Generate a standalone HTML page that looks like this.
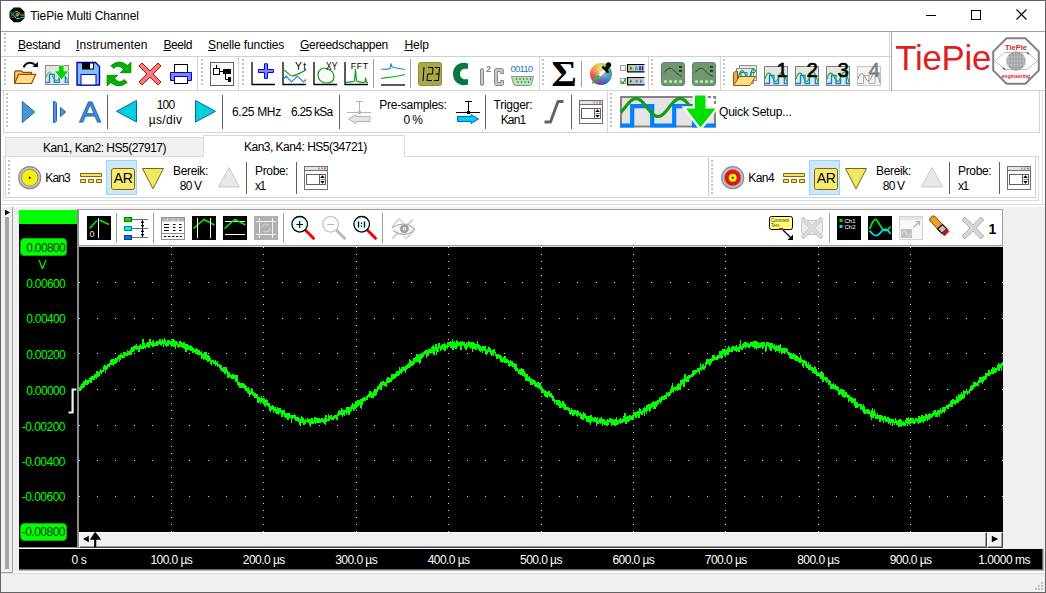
<!DOCTYPE html>
<html lang="nl">
<head>
<meta charset="utf-8">
<title>TiePie Multi Channel</title>
<style>
*{box-sizing:border-box;margin:0;padding:0}
html,body{width:1046px;height:593px;overflow:hidden;background:#fff}
body{position:relative;font-family:"Liberation Sans",sans-serif;font-size:12px;color:#000}
.a{position:absolute}
.t{position:absolute;white-space:nowrap;line-height:14px;font-size:12px;color:#000}
.c{text-align:center}
.hl{position:absolute;height:1px}
.vl{position:absolute;width:1px}
svg{position:absolute;overflow:visible}
.grip{position:absolute;width:2px;background:repeating-linear-gradient(to bottom,#c2c2c2 0 2px,transparent 2px 4px)}
.yl{right:981px;color:#00ff00;text-align:right}
.xl{top:552.5px;color:#fff;text-align:center}
u{text-decoration:underline;text-underline-offset:1px}
</style>
</head>
<body>
<!-- window frame -->
<div class="a" style="left:0;top:0;width:1046px;height:593px;border:1px solid #626262;z-index:50;pointer-events:none"></div>
<!-- title bar -->
<div class="a" id="titlebar" style="left:1px;top:1px;width:1044px;height:30px;background:#fff"></div>
<!-- app icon -->
<svg style="left:0;top:0" width="40" height="30" viewBox="0 0 40 30">
<polygon points="13.8,7.500 20.200,7.500 24.500,11.800 24.500,17.900 20.200,22.200 13.800,22.200 9.500,17.900 9.500,11.800" fill="#000"/>
<circle cx="17.300" cy="14.800" r="1.900" fill="#909090"/>
<path d="M10 17.500H14.500L16.500 12.500H20L21.500 14H24" fill="none" stroke="#f00000" stroke-width="1"/>
<path d="M11 16.500L15 11.500H18L21 15.300H24" fill="none" stroke="#00e000" stroke-width="1"/>
<path d="M10.500 12L16.500 18.500H20L21 17.300H24" fill="none" stroke="#00e8f0" stroke-width="1"/>
</svg>
<div class="t" style="letter-spacing:-0.083px;left:30.2px;top:9px">TiePie Multi Channel</div>
<!-- window controls -->
<svg style="left:926px;top:9px" width="12" height="12"><path d="M0 6.5H10" stroke="#000" stroke-width="1"/></svg>
<svg style="left:970px;top:9px" width="12" height="12"><rect x="1.5" y="1.5" width="9" height="9" fill="none" stroke="#000" stroke-width="1"/></svg>
<svg style="left:1016px;top:9px" width="12" height="12"><path d="M0.5 0.5L10.5 10.5M10.5 0.5L0.5 10.5" stroke="#000" stroke-width="1.1"/></svg>

<!-- menu band -->
<div class="hl" style="left:1px;top:31px;width:890px;background:#a0a0a0"></div>
<div class="grip" style="left:4px;top:33px;height:18px"></div>
<div class="t" style="letter-spacing:-0.258px;left:18px;top:37.5px"><u>B</u>estand</div>
<div class="t" style="letter-spacing:0.132px;left:76px;top:37.5px"><u>I</u>nstrumenten</div>
<div class="t" style="letter-spacing:-0.426px;left:163.4px;top:37.5px"><u>B</u>eeld</div>
<div class="t" style="letter-spacing:-0.126px;left:208px;top:37.5px"><u>S</u>nelle functies</div>
<div class="t" style="letter-spacing:-0.298px;left:300px;top:37.5px"><u>G</u>ereedschappen</div>
<div class="t" style="letter-spacing:-0.096px;left:404.5px;top:37.5px"><u>H</u>elp</div>
<div class="hl" style="left:1px;top:55px;width:890px;background:#fff"></div>
<div class="hl" style="left:1px;top:56px;width:890px;background:#d0d0d0"></div>

<!-- toolbar row 1 -->
<div class="grip" style="left:4px;top:59px;height:26px"></div>
<div class="vl" style="left:197px;top:57px;height:33px;background:#d4d4d4"></div>
<div class="grip" style="left:201px;top:59px;height:26px"></div>
<div class="vl" style="left:238px;top:57px;height:33px;background:#d4d4d4"></div>
<div class="grip" style="left:242px;top:59px;height:26px"></div>
<div class="vl" style="left:539px;top:57px;height:33px;background:#d4d4d4"></div>
<div class="grip" style="left:542px;top:59px;height:26px"></div>
<div class="vl" style="left:648px;top:57px;height:33px;background:#d4d4d4"></div>
<div class="grip" style="left:651px;top:59px;height:26px"></div>
<div class="vl" style="left:720px;top:57px;height:33px;background:#d4d4d4"></div>
<div class="grip" style="left:723px;top:59px;height:26px"></div>
<div class="vl" style="left:889px;top:32px;height:58px;background:#d8d8d8"></div>
<div class="hl" style="left:1px;top:90px;width:890px;background:#d4d4d4"></div>
<!-- thin separators -->
<div class="vl" style="left:373px;top:59px;height:29px;background:#a0a0a0"></div>
<div class="vl" style="left:410px;top:59px;height:29px;background:#a0a0a0"></div>
<div class="vl" style="left:581px;top:61px;height:26px;background:#a0a0a0"></div>
<div class="a" style="left:590px;top:63px;width:22px;height:22px;border-radius:50%;background:radial-gradient(circle,rgba(255,255,255,.5) 0,rgba(255,255,255,.15) 45%,rgba(255,255,255,0) 75%),conic-gradient(from 0deg,#d8d448 0deg,#80c050 30deg,#38a858 60deg,#3898b8 95deg,#3880d0 120deg,#3058a8 155deg,#5840a0 185deg,#a830b0 215deg,#d83070 240deg,#f04838 268deg,#f08838 300deg,#e8c048 335deg,#d8d448 360deg)"></div>
<svg style="left:0;top:0" width="1046" height="95" viewBox="0 0 1046 95">
<!-- open folder -->
<g>
<path d="M14.600 83.500V72.200Q14.600 70.800 16 70.800H21.500L23 72.400H31.500V74.300" fill="#f0c878" stroke="#a04800" stroke-width="1.200"/>
<path d="M14.600 83.500L18.600 74.300H35.800L31.500 83.500Z" fill="#ffe088" stroke="#a04800" stroke-width="1.200" stroke-linejoin="round"/>
<path d="M23.600 67.300C25.500 62.300,31.500 61.200,35.500 65.200" fill="none" stroke="#000" stroke-width="1.900"/>
<path d="M37.900 61.800V67H32.500Z" fill="#000"/>
</g>
<!-- load waveform -->
<g>
<rect x="45.500" y="65.500" width="23" height="19" fill="#e4e4e4" stroke="#8c8c8c"/>
<path d="M46 82.300H49.500V74.300H54.300V82.300H59.300V76H65.300V82.300H68" fill="none" stroke="#0080ff" stroke-width="1.300"/>
<path d="M46 77.500C47.500 73.500,48.500 72.200,49.500 72.200S52 75,53.200 77.500S55.500 80.500,57 80.500S59 78,60 76M66 77C67 78.500,67.500 80,68.200 81.500" fill="none" stroke="#20b020" stroke-width="1"/>
<path d="M58.900 66H63.600V71.300H68.100L61.500 79.600L55 71.300H58.900Z" fill="#00d400" stroke="#f0f0f0" stroke-width="1.200"/>
<path d="M58.900 66H63.600V71.300H68.100L61.500 79.600L55 71.300H58.900Z" fill="#00d400"/>
</g>
<!-- save floppy -->
<g>
<path d="M77 62.5H95.5L99.5 66.5V85H77Z" fill="#80c0ff" stroke="#0000c0" stroke-width="1.4"/>
<rect x="82" y="62.5" width="12" height="7" fill="#000"/>
<rect x="90" y="63.5" width="3" height="5" fill="#fff"/>
<rect x="81" y="74.5" width="15" height="10.5" fill="#fff" stroke="#0000c0" stroke-width="1"/>
</g>
<!-- refresh -->
<g fill="#00b000" stroke="#008000" stroke-width="0.800" stroke-linejoin="round">
<path d="M110.900 65.600Q119 58.500 127.500 65.500L130.900 62V72.700H120.300L123.300 69.500Q119 63.500 113.600 68.500Z"/>
<path d="M127.100 82.400Q119 89.500 110.500 82.500L107.100 86V75.300H117.700L114.700 78.500Q119 84.500 124.400 79.500Z"/>
</g>
<!-- red X -->
<path d="M142 63L150 71L158 63L161 66L153 74L161 82L158 85L150 77L142 85L139 82L147 74L139 66Z" fill="#f08080" stroke="#d00000" stroke-width="1"/>
<!-- printer -->
<g>
<rect x="174.500" y="64.5" width="13" height="19" fill="#fff" stroke="#000" stroke-width="1"/>
<path d="M170.500 72.500H191.500V80.500H187.500V76.500H174.500V80.500H170.500Z" fill="#8080ff" stroke="#0000c0" stroke-width="1"/>
</g>
<!-- diagram -->
<g>
<rect x="210.500" y="62.500" width="23" height="23" fill="#fafafa" stroke="#606060"/>
<rect x="213.500" y="68.500" width="6" height="6" fill="#fff" stroke="#000"/>
<path d="M216.500 65V68M220 71.500H224M225.500 74V79.500H228" stroke="#000" fill="none"/>
<rect x="223" y="69" width="8" height="5" fill="#000"/>
<rect x="228" y="77" width="3" height="5" fill="#000"/>
</g>
<!-- plus graph -->
<g>
<path d="M252 62V84.500H275" fill="none" stroke="#000" stroke-width="1.3"/>
<path d="M264.500 63.800H267.500V69.500H273.400V72.500H267.500V78.400H264.500V72.500H258.400V69.500H264.500Z" fill="#8888ff" stroke="#0000f0" stroke-width="1" stroke-linejoin="miter"/>
</g>
<!-- Yt -->
<g>
<path d="M283 62V84.500H306" fill="none" stroke="#000" stroke-width="1.3"/>
<path d="M283.500 70C287 71,289 76,292 76S300 73,306 70" fill="none" stroke="#10a010" stroke-width="1.2"/>
<path d="M283.500 79L286 76L291.500 82L297.500 76L303.500 82L306 79.500" fill="none" stroke="#3088d0" stroke-width="1.2"/>
<text x="295" y="69.500" font-family="Liberation Sans, sans-serif" font-size="10.300" textLength="11" lengthAdjust="spacing" fill="#000">Yt</text>
</g>
<!-- XY -->
<g>
<path d="M314 62V84.500H337" fill="none" stroke="#000" stroke-width="1.3"/>
<path d="M318 75C318 70,322 67.500,326 68.500S334 72,334 77S330 83,326 83S318 80,318 75Z" fill="none" stroke="#10a010" stroke-width="1.2"/>
<text x="326" y="69.500" font-family="Liberation Sans, sans-serif" font-size="10.300" textLength="11.300" lengthAdjust="spacingAndGlyphs" fill="#000">XY</text>
</g>
<!-- FFT -->
<g>
<path d="M345 62V84.500H368" fill="none" stroke="#000" stroke-width="1.3"/>
<path d="M345.500 82.500C349 82,353 82,354.500 81L355.500 69L356.500 81C360 82.500,364 82.500,365 82L365.500 77.500L366.500 82.500H368" fill="none" stroke="#10a010" stroke-width="1.2"/>
<text x="350.700" y="68.700" font-family="Liberation Sans, sans-serif" font-size="8.800" textLength="17.300" lengthAdjust="spacing" fill="#000">FFT</text>
</g>
<!-- two lines -->
<g>
<path d="M381 85H405" stroke="#000" stroke-width="1.3"/>
<path d="M381 69C385 69.500,388 69.500,390 68.500L391 63.500L392 67C396 68,400 68.500,405 69.500" fill="none" stroke="#3088d0" stroke-width="1.2"/>
<path d="M381 78.500C387 77,395 77.500,405 74.500" fill="none" stroke="#10b010" stroke-width="1.2"/>
</g>
<!-- 123 -->
<g>
<rect x="418.500" y="62.500" width="23" height="23" rx="2" fill="#a8a848" stroke="#909030"/>
<path d="M424 67L423 81M428 67.500H433L432.500 74H427.500L427 80.500H432M435 67.500H439.500L439 74H435.500M439 74L438.500 80.500H434" fill="none" stroke="#000" stroke-width="1"/>
</g>
<!-- C -->
<path d="M468 63.500C460 61,453 66,453 74S460 87,468 84.500V79C463 80,460 78,460 74S463 68,468 69Z" fill="#087840"/>
<!-- I2C -->
<g fill="#c8c8c8" stroke="#888" stroke-width="1">
<rect x="480.500" y="68.500" width="3" height="17" rx="1.500"/>
<path d="M503.500 73.500V70.500C503.500 69,502.500 68.500,501.500 68.500H496C495 68.500,494.500 69.500,494.500 70.500V83.500C494.500 84.500,495 85.500,496 85.500H501.500C502.500 85.500,503.500 85,503.500 83.500V80.500H500.500V82.500H497.500V71.500H500.500V73.500Z"/>
</g>
<text x="486" y="71.500" font-family="Liberation Sans, sans-serif" font-size="9" fill="#808080" font-weight="bold">2</text>
<!-- serial -->
<g>
<text x="510.500" y="72" font-family="Liberation Sans, sans-serif" font-size="9.500" letter-spacing="-0.800" fill="#2080d0">00110</text>
<path d="M511.500 76.500H533.500L531.500 84C531.300 85,530.500 85.500,529.500 85.500H515.500C514.500 85.500,513.700 85,513.500 84Z" fill="#b4e4b4" stroke="#909090"/>
<g fill="#000"><rect x="516" y="78.500" width="1" height="1"/><rect x="519.500" y="78.500" width="1" height="1"/><rect x="523" y="78.500" width="1" height="1"/><rect x="526.500" y="78.500" width="1" height="1"/><rect x="530" y="78.500" width="1" height="1"/><rect x="517.500" y="81.500" width="1" height="1"/><rect x="521" y="81.500" width="1" height="1"/><rect x="524.500" y="81.500" width="1" height="1"/><rect x="528" y="81.500" width="1" height="1"/></g>
</g>
<!-- color wheel eyedropper -->
<g>
<path d="M605.300 69.700L598 77" stroke="#fff" stroke-width="2.600"/>
<path d="M599.300 75.500L594.800 80" stroke="#00e000" stroke-width="2.600"/>
<ellipse cx="593.300" cy="82.300" rx="1.100" ry="1.600" fill="#00e000" transform="rotate(35 593.300 82.300)"/>
<path d="M603.200 67.300L607.700 71.800" stroke="#000" stroke-width="2.400" stroke-linecap="round"/>
<path d="M605.500 69.500L608 67" stroke="#000" stroke-width="3.600"/>
<circle cx="608.500" cy="65" r="2.700" fill="#000"/>
</g>
<!-- checkbox toolbars -->
<g>
<rect x="620.500" y="65.500" width="5" height="5" fill="#fff" stroke="#a0a0a0"/>
<rect x="620.500" y="78.500" width="5" height="5" fill="#fff" stroke="#a0a0a0"/>
<path d="M620.800 81L622.800 83.500L626 78" fill="none" stroke="#00a000" stroke-width="1.200"/>
<rect x="628" y="65" width="16.500" height="6.500" fill="#c6c6c6"/>
<rect x="628" y="78" width="16.500" height="6.500" fill="#c6c6c6"/>
<path d="M644.500 64.500H627.500V71.800H644.500M644.500 77.500H627.500V84.800H644.500" fill="none" stroke="#000" stroke-width="1.200"/>
<path d="M630 66.300V70.300L632.500 68.300Z" fill="#00a000"/>
<path d="M635 70.300L636.300 66.500L637.600 70.300M635.500 69H637" stroke="#10b0c0" stroke-width="1" fill="none"/>
<path d="M640 66.300V70.300M642.500 66.300V70.300" stroke="#0000c8" stroke-width="1.400"/>
<path d="M630 79.300V83.300L632.500 81.300Z" fill="#00a000"/>
<path d="M637.500 79.300V83.300L635 81.300Z" fill="#1098e0"/>
<path d="M640 79.300V83.300L642.500 81.300Z" fill="#1098e0"/>
</g>
<!-- green scope icons -->
<g id="gsc">
<rect x="661.500" y="62.500" width="23" height="23" rx="2.500" fill="#709870" stroke="#608860"/>
<path d="M664 72.500C667 69,669.500 67.500,671.500 68.500S676 74,682 76.500" fill="none" stroke="#303830" stroke-width="1"/>
<rect x="679" y="66" width="3" height="1.800" fill="#203020"/>
<rect x="679" y="70" width="3" height="1.800" fill="#203020"/>
<g fill="#d0f0c0"><rect x="664.200" y="80.300" width="2.600" height="2.500"/><rect x="669.200" y="80.300" width="2.600" height="2.500"/><rect x="674.200" y="80.300" width="2.600" height="2.500"/><rect x="679.200" y="80.300" width="2.600" height="2.500"/></g>
</g>
<use href="#gsc" x="31"/>
<!-- folder with waves -->
<g>
<rect x="739.500" y="65.500" width="17" height="15" fill="#e8e8e8" stroke="#909090"/>
<rect x="736.500" y="68.500" width="17" height="15" fill="#e8e8e8" stroke="#909090"/>
<path d="M738 79C740 69,743 69,745 74S749 80,751 73S754 69,756 72" fill="none" stroke="#10b010" stroke-width="1.200"/>
<path d="M741 77V72.500H747V77M751 77V72.500H755" fill="none" stroke="#0080ff" stroke-width="1.200"/>
<path d="M733.500 85V73L735 71.500H737.500V80" fill="#e8a860" stroke="#a05000"/>
<path d="M733.500 85.500L739.500 76.500H755.500L750 85.500Z" fill="#ffe080" stroke="#a05000"/>
</g>
<!-- numbered setups -->
<g id="ns">
<rect x="764.500" y="66.500" width="23" height="19" fill="#e6e6e6" stroke="#808080"/>
<path d="M765 83.500H769.500V75.500H774V83.500H778.500V75.500H784.300V83.500H787" fill="none" stroke="#0080ff" stroke-width="1.300"/>
<path d="M765 79C767 71.500,770 71.500,772.200 77S776.500 83.500,779 76.500S783.500 70.500,787 82" fill="none" stroke="#18b018" stroke-width="1.100"/>
</g>
<use href="#ns" x="31"/>
<use href="#ns" x="62"/>
<g>
<rect x="857.500" y="66.500" width="23" height="19" fill="#f4f4f4" stroke="#c4c4c4"/>
<path d="M858 83.500H863.500V75.500H869V83.500H875V75.500H880V83.500" fill="none" stroke="#b0b0b0" stroke-width="1"/>
<path d="M858 79C860 72,862.500 72,865 77S869 83,872 76S876.500 71,880 82" fill="none" stroke="#909090" stroke-width="1"/>
</g>
<g font-family="Liberation Sans, sans-serif" font-size="20.500" fill="#000" stroke="#000" stroke-width="0.600">
<text x="776.500" y="76.500">1</text>
<text x="806.500" y="76.500">2</text>
<text x="837.500" y="76.500">3</text>
<text x="868.500" y="76.500" fill="#808080" stroke="#808080">4</text>
</g>

</svg>
<div class="a" style="left:551px;top:56.400px;width:26px;height:38px;font-family:'Liberation Serif',serif;font-weight:bold;font-size:35px;line-height:38px;text-align:center;transform:scaleX(1.1)">Σ</div>

<!-- toolbar row 2 frame -->
<div class="a" style="left:3px;top:90px;width:1037px;height:43px;border:1px solid #d4d4d4"></div>
<div class="grip" style="left:6px;top:93px;height:34px"></div>
<div class="vl" style="left:107px;top:95px;height:34px;background:#606060"></div>
<div class="vl" style="left:222px;top:95px;height:34px;background:#606060"></div>
<div class="vl" style="left:339px;top:95px;height:34px;background:#606060"></div>
<div class="vl" style="left:485px;top:95px;height:34px;background:#606060"></div>
<div class="vl" style="left:571px;top:95px;height:34px;background:#606060"></div>
<div class="vl" style="left:607px;top:91px;height:41px;background:#d4d4d4"></div>
<div class="grip" style="left:610px;top:93px;height:34px"></div>
<svg style="left:0;top:0" width="1046" height="135" viewBox="0 0 1046 135">
<!-- play -->
<path d="M22.300 101.500V122.500L34.800 112Z" fill="#4a94dc" stroke="#2464b4" stroke-width="1"/>
<!-- step -->
<path d="M53.500 101.500H55L56.500 103V121L55 122.500H53.500Z" fill="#4a94dc" stroke="#2464b4" stroke-width="1"/>
<path d="M60.500 107.500V116.500L65.800 112Z" fill="#4a94dc" stroke="#2464b4" stroke-width="1"/>
<!-- left/right time triangles -->
<path d="M136.500 100.500V122L116.500 111.300Z" fill="#00d0d8" stroke="#0060d0" stroke-width="1"/>
<path d="M195.500 100.500V122L215.500 111.300Z" fill="#00d0d8" stroke="#0060d0" stroke-width="1"/>
<!-- disabled presample-left -->
<g stroke="#b4b4b4" fill="none" stroke-width="1">
<path d="M356 101.500H363M359.500 101.500V112M347 112.500H371"/>
<rect x="358" y="111" width="3" height="3" fill="#b4b4b4" stroke="none"/>
<path d="M370 116.500H356V114.500L348.500 119L356 123.500V121.500H370Z" fill="#e4e4e4"/>
</g>
<!-- active presample-right -->
<g stroke="#000" fill="none" stroke-width="1">
<path d="M465 101.500H472M468.500 101.500V112M456 112.500H480"/>
<rect x="467" y="111" width="3" height="3" fill="#000" stroke="none"/>
<path d="M457.500 116.500H471V114.500L478.500 119L471 123.500V121.500H457.500Z" fill="#00d0e8" stroke="#0060d0"/>
</g>
<!-- rising edge -->
<path d="M544.500 122H550.500L558 101.500H563.500" fill="none" stroke="#646464" stroke-width="2.900" stroke-linejoin="round"/>
<!-- window icon -->
<g id="wic">
<rect x="579.500" y="100.500" width="23" height="23" fill="#fff" stroke="#707070"/>
<rect x="580" y="101" width="22" height="3" fill="#e4e4e4"/>
<path d="M580 104.500H602" stroke="#707070"/>
<rect x="599" y="101.500" width="2" height="2" fill="#ff5050"/>
<rect x="593" y="101.500" width="2" height="2" fill="#a8a8a8"/><rect x="596" y="101.500" width="2" height="2" fill="#a8a8a8"/>
<rect x="581.500" y="108.500" width="19" height="10" fill="#fff" stroke="#606060"/>
<path d="M595.500 113.500H600" stroke="#808080"/><path d="M594.500 109V118" stroke="#606060"/>
<path d="M595.200 112L597.500 109.200L599.800 112ZM595.200 115L597.500 117.800L599.800 115Z" fill="#000"/>
</g>
<!-- quick setup -->
<g>
<rect x="621" y="97" width="94" height="29.500" fill="#e4e4e4" stroke="#848484" stroke-width="2"/>
<path d="M620 125.500H632.200V106.200H652.200V125.500H674.200V106.200H694V125.500H716" fill="none" stroke="#0080ff" stroke-width="4.200"/>
<polyline points="621.0,112.4 622.5,110.6 624.0,108.8 625.5,106.9 627.0,105.0 628.5,103.2 630.0,101.6 631.5,100.3 633.0,99.3 634.5,98.7 636.0,98.5 637.5,98.7 639.0,99.3 640.5,100.3 642.0,101.6 643.5,103.2 645.0,105.0 646.5,106.9 648.0,108.8 649.5,110.6 651.0,112.4 652.5,113.9 654.0,115.1 655.5,115.9 657.0,116.4 658.5,116.5 660.0,116.1 661.5,115.4 663.0,114.3 664.5,112.9 666.0,111.2 667.5,109.4 669.0,107.5 670.5,105.6 672.0,103.8 673.5,102.1 675.0,100.7 676.5,99.6 678.0,98.9 679.5,98.5 681.0,98.6 682.5,99.1 684.0,99.9 685.5,101.1 687.0,102.6 688.5,104.4 690.0,106.2 691.5,108.1 693.0,110.0 694.5,111.8 696.0,113.4 697.5,114.7 699.0,115.7" fill="none" stroke="#10a010" stroke-width="3.200" stroke-linejoin="round"/>
<path d="M705.500 95.500H716.500V108.500H705.500Z" fill="#fff"/>
<path d="M707 97H715V104" fill="none" stroke="#848484" stroke-width="2" stroke-dasharray="4 2"/>
<path d="M695 96H705.500V108.500H715.500L700.500 127.500L686 108.500H695Z" fill="#00e000" stroke="#fff" stroke-width="4.500" stroke-linejoin="miter"/>
<path d="M695 95.500H705.500V108.500H715.500L700.500 127.500L686 108.500H695Z" fill="#00e000"/>
</g>
</svg>
<div class="a" style="left:74px;top:95px;width:32px;height:34px;font-size:29px;line-height:34px;text-align:center;color:#4a94dc;-webkit-text-stroke:1px #2464b4;transform:scaleX(1.09)">A</div>
<div class="t c" style="letter-spacing:-0.816px;left:140px;top:98px;width:51px">100</div>
<div class="t c" style="letter-spacing:0.301px;left:140px;top:113px;width:51px">µs/div</div>
<div class="t" style="letter-spacing:-0.308px;left:232px;top:105px">6.25 MHz</div>
<div class="t" style="letter-spacing:-0.754px;left:291px;top:105px">6.25 kSa</div>
<div class="t c" style="letter-spacing:-0.281px;left:373px;top:98px;width:80px">Pre-samples:</div>
<div class="t c" style="letter-spacing:-0.594px;left:373px;top:113px;width:80px">0 %</div>
<div class="t c" style="letter-spacing:-0.244px;left:488px;top:98px;width:50px">Trigger:</div>
<div class="t c" style="letter-spacing:-0.844px;left:488px;top:113px;width:50px">Kan1</div>
<div class="t" style="letter-spacing:-0.198px;left:719px;top:105px">Quick Setup...</div>

<!-- logo panel -->
<div class="a" style="left:891px;top:31px;width:154px;height:60px;background:#fff;border-left:1px solid #a8a8a8;border-top:1px solid #a0a0a0;border-bottom:1px solid #d0d0d0"></div>
<div class="a" style="left:895.3px;top:37.5px;width:100px;height:40px;font-size:34.7px;line-height:40px;color:#e02020;letter-spacing:-0.2px;white-space:nowrap" id="lg">TiePie</div>
<svg style="left:990px;top:35px" width="54" height="52" viewBox="990 35 54 52">
<polygon points="1006.6,38.2 1025.4,38.2 1038.8,51.6 1038.8,70.4 1025.4,83.8 1006.6,83.8 993.2,70.4 993.2,51.6" fill="#fff" stroke="#808080" stroke-width="2"/>
<path d="M994.500 61L1005 52.500H1027L1037.500 61L1027 69.500H1005Z" fill="none" stroke="#a0a0a0" stroke-width="0.700"/>
<path d="M1027 52.500L1029 54M1005 69.500L1003 68" stroke="#404040" stroke-width="1.200"/>
<circle cx="1016" cy="61" r="9.300" fill="#b4b4b4" stroke="#909090" stroke-width="0.600"/>
<path d="M1010 54V68M1013 52.500V69.500M1016 52V70M1019 52.500V69.500M1022 54V68" stroke="#8c8c8c" stroke-width="0.800"/>
<path d="M1007.500 57H1024.500M1007 61H1025M1007.500 65H1024.500" stroke="#d0d0d0" stroke-width="0.600"/>
<text x="1016" y="50" text-anchor="middle" font-family="Liberation Sans, sans-serif" font-size="7.500" font-weight="bold" fill="#e02020">TiePie</text>
<text x="1016" y="77.500" text-anchor="middle" font-family="Liberation Sans, sans-serif" font-size="5" font-weight="bold" fill="#e02020">engineering</text>
</svg>

<!-- tab strip -->
<div class="a" style="left:5px;top:137px;width:199px;height:20px;background:#f0f0f0;border:1px solid #d9d9d9;border-bottom:none"></div>
<div class="hl" style="left:3px;top:156px;width:1036px;background:#d9d9d9"></div>
<div class="a" style="left:203px;top:135px;width:202px;height:22px;background:#fff;border:1px solid #d9d9d9;border-bottom:none"></div>
<div class="t" style="letter-spacing:-0.504px;left:43px;top:140.500px">Kan1, Kan2: HS5(27917)</div>
<div class="t" style="letter-spacing:-0.519px;left:244px;top:139.500px">Kan3, Kan4: HS5(34721)</div>

<!-- channel toolbar (tab page) -->
<div class="a" style="left:5px;top:157px;width:1031px;height:41px;background:#fff;border:1px solid #d0d0d0;border-top:none"></div>
<div class="a" style="left:3px;top:157px;width:1036px;height:44px;border:1px solid #dcdcdc;border-top:none"></div>
<div class="vl" style="left:1042px;top:91px;height:114px;background:#e0e0e0"></div>
<div class="grip" style="left:8px;top:160px;height:34px"></div>
<div class="vl" style="left:708px;top:158px;height:38px;background:#c8c8c8"></div>
<div class="grip" style="left:711px;top:160px;height:34px"></div>
<div class="a" style="left:106px;top:160px;width:31px;height:35px;background:#cce8ff;border:1px solid #99d1ff"></div>
<div class="a" style="left:809px;top:160px;width:31px;height:35px;background:#cce8ff;border:1px solid #99d1ff"></div>
<svg style="left:0;top:0" width="1046" height="200" viewBox="0 0 1046 200">
<defs>
<g id="chc">
<path d="M80.500 173.500H101.500V176.500H80.500ZM80.500 179.500H85.500V182.500H80.500ZM88.500 179.500H93.500V182.500H88.500ZM96.500 179.500H101.500V182.500H96.500Z" fill="#f4e468" stroke="#906000" stroke-width="1"/>
<rect x="111.500" y="168.500" width="23" height="21" rx="2" fill="#f4ec70" stroke="#906000"/>
<path d="M142.500 168.500H163.500L153 188.800Z" fill="#ece868" stroke="#906000" stroke-width="1"/>
<path d="M218.500 187H239.500L229 167.500Z" fill="#e8e8e8" stroke="#c8c8c8" stroke-width="1"/>
<path d="M246.500 162V194M296.500 162V194" stroke="#606060"/>
<use href="#wic" x="-275" y="66"/>
</g>
</defs>
<use href="#chc"/>
<use href="#chc" x="703"/>
<circle cx="29.700" cy="177.700" r="11" fill="#c4c4c4" stroke="#8c8c8c" stroke-width="1.200"/>
<circle cx="29.700" cy="177.700" r="8.300" fill="#f4f400" stroke="#909090" stroke-width="1"/>
<circle cx="29.700" cy="177.700" r="1" fill="#000"/>
<circle cx="732.700" cy="177.700" r="11" fill="#c4c4c4" stroke="#8c8c8c" stroke-width="1.200"/>
<circle cx="732.700" cy="177.700" r="8.300" fill="#e81010" stroke="#909090" stroke-width="1"/>
<circle cx="732.700" cy="177.700" r="4" fill="#f4f400"/>
<circle cx="732.700" cy="177.700" r="1" fill="#000"/>
</svg>
<div class="t" style="letter-spacing:-0.844px;left:45.300px;top:171px">Kan3</div>
<div class="t" style="letter-spacing:-0.577px;left:748.300px;top:171px">Kan4</div>
<div class="t" style="left:113.700px;top:170.100px;font-size:14px;line-height:16px;letter-spacing:-0.2px">AR</div>
<div class="t" style="left:816.700px;top:170.100px;font-size:14px;line-height:16px;letter-spacing:-0.2px">AR</div>
<div class="t c" style="letter-spacing:-0.360px;left:165px;top:163.500px;width:51px">Bereik:</div>
<div class="t c" style="letter-spacing:-0.829px;left:165px;top:178.500px;width:51px">80 V</div>
<div class="t c" style="letter-spacing:-0.360px;left:868px;top:163.500px;width:51px">Bereik:</div>
<div class="t c" style="letter-spacing:-0.829px;left:868px;top:178.500px;width:51px">80 V</div>
<div class="t" style="letter-spacing:-0.332px;left:255px;top:163.500px">Probe:</div>
<div class="t" style="letter-spacing:-1.387px;left:255px;top:178.500px">x1</div>
<div class="t" style="letter-spacing:-0.332px;left:958px;top:163.500px">Probe:</div>
<div class="t" style="letter-spacing:-1.387px;left:958px;top:178.500px">x1</div>

<!-- lower area -->
<div class="a" style="left:1px;top:207px;width:1044px;height:385px;background:#f0f0f0"></div>
<div class="hl" style="left:1px;top:204px;width:1044px;background:#dcdcdc"></div>
<div class="vl" style="left:12px;top:207px;height:366px;background:#a0a0a0"></div>
<div class="hl" style="left:1px;top:572px;width:12px;background:#a0a0a0"></div>
<div class="a" style="left:5px;top:217px;width:4px;height:352px;background:#a4a4a4"></div>
<svg style="left:4px;top:209px" width="8" height="8"><path d="M1 0.800V6.200L6.200 3.500Z" fill="#000"/></svg>
<!-- y axis panel -->
<div class="a" style="left:19px;top:210px;width:58px;height:337px;background:#000"></div>
<div class="a" style="left:19px;top:210px;width:58px;height:14px;background:#00ff00"></div>
<div class="vl" style="left:77px;top:209px;height:339px;background:#8c8c8c"></div>
<div class="vl" style="left:78px;top:209px;height:339px;background:#8c8c8c"></div>
<div class="a ylb" style="left:20px;top:238px;width:47px;height:18px;background:#00ff00;border-radius:4px;border:1px solid #00b000"></div>
<div class="t yl" style="letter-spacing:-0.648px;top:240.8px;color:#003800">0.00800</div>
<div class="t c" style="top:257.500px;left:19px;width:47px;color:#00ff00">V</div>
<div class="t yl" style="letter-spacing:-0.648px;top:277.1px">0.00600</div>
<div class="t yl" style="letter-spacing:-0.648px;top:312.4px">0.00400</div>
<div class="t yl" style="letter-spacing:-0.648px;top:348.2px">0.00200</div>
<div class="t yl" style="letter-spacing:-0.648px;top:384.2px">0.00000</div>
<div class="t yl" style="letter-spacing:-0.511px;top:419.5px">-0.00200</div>
<div class="t yl" style="letter-spacing:-0.511px;top:455.2px">-0.00400</div>
<div class="t yl" style="letter-spacing:-0.511px;top:490.3px">-0.00600</div>
<div class="a ylb" style="left:20px;top:523px;width:47px;height:18px;background:#00ff00;border-radius:4px;border:1px solid #00b000"></div>
<div class="t yl" style="letter-spacing:-0.511px;top:525.3px;color:#003800">-0.00800</div>
<!-- plot toolbar -->
<div class="a" style="left:79px;top:209px;width:924px;height:36px;background:#fff"></div>
<div class="hl" style="left:79px;top:245px;width:924px;background:#a0a0a0"></div>
<div class="hl" style="left:79px;top:246px;width:924px;background:#d8d8d8"></div>
<div class="hl" style="left:78px;top:209px;width:925px;background:#a0a0a0"></div>
<div class="vl" style="left:1002px;top:209px;height:37px;background:#a0a0a0"></div>
<div class="vl" style="left:116px;top:213px;height:30px;background:#a0a0a0"></div>
<div class="vl" style="left:153px;top:213px;height:30px;background:#a0a0a0"></div>
<div class="vl" style="left:283px;top:213px;height:30px;background:#a0a0a0"></div>
<div class="vl" style="left:382px;top:213px;height:30px;background:#a0a0a0"></div>
<div class="vl" style="left:829px;top:213px;height:30px;background:#a0a0a0"></div>
<svg style="left:0;top:0" width="1046" height="250" viewBox="0 0 1046 250">
<!-- icon 1: zero ref -->
<rect x="87" y="216" width="24" height="24" fill="#000"/>
<path d="M89.500 228.500L97 220.500" stroke="#00ee00" stroke-width="1.500"/><path d="M99.500 220L109 224.500" stroke="#00ee00" stroke-width="1.500"/>
<path d="M98.500 218V238" stroke="#fff" stroke-width="1"/>
<text x="89.500" y="237" font-family="Liberation Sans, sans-serif" font-size="9" fill="#e0e0e0">0</text>
<!-- icon 2: channel spacing -->
<rect x="124.500" y="217.500" width="7" height="4" fill="#00e000" stroke="#008000"/>
<rect x="124.500" y="226.500" width="7" height="4" fill="#00e8f0" stroke="#008890"/>
<rect x="124.500" y="235.500" width="7" height="4" fill="#1070e0" stroke="#0040a0"/>
<path d="M132 219.500H148M132 228.500H148M132 237.500H148" stroke="#707070" stroke-width="1"/>
<path d="M142.500 220V237" stroke="#000" stroke-width="1"/>
<path d="M142.500 220L140.800 223H144.200ZM142.500 228L140.800 225H144.200ZM142.500 229L140.800 232H144.200ZM142.500 237L140.800 234H144.200Z" fill="#000"/>
<!-- icon 3: table -->
<rect x="161.500" y="217.500" width="23" height="22" fill="#fff" stroke="#909090"/>
<rect x="162" y="218" width="22" height="3.500" fill="#b4b4b4"/>
<path d="M167.500 218V221.500M173 218V221.500M178.500 218V221.500" stroke="#e0e0e0" stroke-width="0.800"/>
<path d="M162 233.500H184" stroke="#909090"/>
<path d="M164 224.500H169M173 224.500H175.500M179 224.500H181.500M164 227.500H169M173 227.500H175.500M179 227.500H181.500M164 230.500H169M173 230.500H175.500M179 230.500H181.500" stroke="#000" stroke-width="1.200"/>
<path d="M164 236.500H182" stroke="#000" stroke-width="1.200" stroke-dasharray="2.500 1.500"/>
<!-- icon 4 -->
<rect x="192" y="216" width="24" height="24" fill="#000"/>
<path d="M193.500 228.500L204 219.500L214.500 225" fill="none" stroke="#00ee00" stroke-width="1.600"/>
<path d="M197.500 218V238M210.500 218V238" stroke="#fff" stroke-width="1"/>
<!-- icon 5 -->
<rect x="223" y="216" width="24" height="24" fill="#000"/>
<path d="M225 221.500H245M225 234.500H245" stroke="#fff" stroke-width="1"/>
<path d="M224.500 228.500L235 219.500L245.500 225" fill="none" stroke="#00ee00" stroke-width="1.600"/>
<!-- icon 6 disabled -->
<rect x="254" y="216" width="24" height="24" fill="#b0b0b0"/>
<path d="M259.500 218V238M272.500 218V238M256 221.500H276M256 234.500H276" stroke="#f4f4f4" stroke-width="1"/>
<circle cx="266" cy="228" r="3.800" fill="none" stroke="#c8c8c8" stroke-width="1.500" stroke-dasharray="9 3"/>
<!-- zoom in -->
<g id="mg">
<path d="M305.500 230.300L313.500 238.300" stroke="#f00000" stroke-width="3" stroke-linecap="round"/>
<circle cx="299.700" cy="224.300" r="7.800" fill="#e4ffff" stroke="#000" stroke-width="1.300"/>
</g>
<path d="M296.500 224.500H303M299.700 221V228" stroke="#000" stroke-width="1.100"/>
<!-- zoom out disabled -->
<path d="M336.500 230.300L344.500 238.300" stroke="#b8b8b8" stroke-width="3" stroke-linecap="round"/>
<circle cx="330.600" cy="224.300" r="7.800" fill="#fcfcfc" stroke="#c0c0c0" stroke-width="1.200"/>
<path d="M327.500 224.500H334" stroke="#b0b0b0" stroke-width="1"/>
<!-- zoom 1:1 -->
<use href="#mg" x="62"/>
<path d="M358.500 221.500V227.500M364.500 221.500V227.500" stroke="#000" stroke-width="1.300"/>
<path d="M361.500 222.500V224M361.500 225.500V227" stroke="#000" stroke-width="1.100"/>
<!-- eye disabled -->
<g fill="none">
<path d="M392 238.500L413 219.500" stroke="#c8c8c8" stroke-width="1.600"/>
<path d="M392 226.500L399.300 219L403.500 223M403 236L406.300 238.400L413.500 231.500" stroke="#cccccc" stroke-width="1.300"/>
<path d="M392 227.800C396 225,400 224,404 224S411.500 226,414.700 229.300C411.500 232.500,408 234.400,404 234.400S396.500 233,393.500 230.500" fill="#f6f6f6" stroke="#a8a8a8" stroke-width="1.100"/>
<circle cx="404.400" cy="228.800" r="4.500" fill="#a2a2a2"/>
<circle cx="404.400" cy="228.800" r="1.800" fill="#ececec"/>
<circle cx="404.400" cy="228.800" r="0.700" fill="#b0b0b0"/>
</g>
<!-- comment -->
<rect x="769.500" y="216.500" width="23" height="13" rx="2" fill="#ffff80" stroke="#000"/>
<rect x="779" y="228" width="4" height="2" fill="#f00000"/>
<path d="M783 230L790.500 237.500" stroke="#000" stroke-width="1.200"/>
<path d="M793 240V234.500L787.500 240Z" fill="#000"/>
<text x="771" y="222" font-family="Liberation Sans, sans-serif" font-size="4.500" fill="#404000" textLength="18">Comment</text>
<text x="771" y="227.300" font-family="Liberation Sans, sans-serif" font-size="4.500" fill="#404000">Text</text>
<!-- disabled comment X -->
<g stroke="#c4c4c4" fill="#ececec">
<rect x="801.500" y="220.500" width="21" height="14" rx="3"/>
<path d="M801 219.500L803.500 217L812 225.500L820.500 217L823 219.500L814.500 228L823 236.500L820.500 239L812 230.500L803.500 239L801 236.500L809.500 228Z" fill="#dcdcdc"/>
</g>
<!-- legend -->
<rect x="837" y="216" width="24" height="24" fill="#000"/>
<rect x="839.500" y="219" width="3" height="3" fill="#00e000"/>
<rect x="839.500" y="225" width="3" height="3" fill="#00e0f0"/>
<text x="844.500" y="223" font-family="Liberation Sans, sans-serif" font-size="6" fill="#fff">Ch1</text>
<text x="844.500" y="229" font-family="Liberation Sans, sans-serif" font-size="6" fill="#fff">Ch2</text>
<!-- waves -->
<rect x="868" y="216" width="24" height="24" fill="#000"/>
<path d="M869.500 229C871.500 225,873 219.500,875.500 219.500S880 227,883 229.500S888 230,890.500 226.500" fill="none" stroke="#00e000" stroke-width="1.800"/>
<path d="M869.500 230.500C872 234,874 236,877 235.500S881 230,884.500 229.500S888.500 231,890.500 234" fill="none" stroke="#00e0f0" stroke-width="1.800"/>
<!-- disabled export window -->
<g>
<rect x="899.500" y="216.500" width="23" height="23" fill="#f8f8f8" stroke="#d4d4d4"/>
<rect x="900" y="217" width="22" height="3" fill="#e4e4e4"/>
<rect x="901" y="229" width="11" height="9" fill="#c0c0c0"/>
<path d="M902 234C903.500 230,905 230,906.500 234S909.500 237.500,911 233" stroke="#e8e8e8" fill="none"/>
<path d="M913.500 227.500L919.500 221.500M915.500 221.500H919.500V225.500" stroke="#b0b0b0" fill="none" stroke-width="1.200"/>
</g>
<!-- eraser pencil -->
<g>
<ellipse cx="946.500" cy="234" rx="6.500" ry="3.800" fill="#fff" stroke="#f0d8d8" stroke-width="0.800" stroke-dasharray="1.500 1"/>
<path d="M929.800 218.500L932.500 216H934.500L942.500 224.500L937.500 229L929.800 220.500Z" fill="#f0a020" stroke="#603000" stroke-width="0.900"/>
<path d="M937.500 229L942.500 224.500L947 229L942 233.500Z" fill="#c0c0c0" stroke="#101010" stroke-width="1.200"/>
<path d="M942 233.500L947 229L949 231.500L944.500 236Z" fill="#c01818" stroke="#801010" stroke-width="0.600"/>
</g>
<!-- gray X -->
<path d="M962 220L965 217L973 225L981 217L984 220L976 228L984 236L981 239L973 231L965 239L962 236L970 228Z" fill="#d4d4d4" stroke="#b8b8b8" stroke-width="1"/>
</svg>
<div class="t" style="left:988.500px;top:219.500px;font-size:14px;line-height:18px;font-weight:bold">1</div>

<!-- plot -->
<div class="a" style="left:79px;top:247px;width:924px;height:285px;background:#000"></div>
<svg style="left:0;top:0" width="1046" height="593" viewBox="0 0 1046 593">
<path d="M79 282.5h1M79 318.5h1M79 353.5h1M79 389.5h1M79 425.5h1M79 460.5h1M79 496.5h1M97 282.5h1M97 318.5h1M97 353.5h1M97 389.5h1M97 425.5h1M97 460.5h1M97 496.5h1M115 282.5h1M115 318.5h1M115 353.5h1M115 389.5h1M115 425.5h1M115 460.5h1M115 496.5h1M134 282.5h1M134 318.5h1M134 353.5h1M134 389.5h1M134 425.5h1M134 460.5h1M134 496.5h1M152 282.5h1M152 318.5h1M152 353.5h1M152 389.5h1M152 425.5h1M152 460.5h1M152 496.5h1M171 247.5h1M171 254.5h1M171 261.5h1M171 268.5h1M171 275.5h1M171 282.5h1M171 289.5h1M171 296.5h1M171 304.5h1M171 311.5h1M171 318.5h1M171 325.5h1M171 332.5h1M171 339.5h1M171 346.5h1M171 353.5h1M171 361.5h1M171 368.5h1M171 375.5h1M171 382.5h1M171 389.5h1M171 396.5h1M171 403.5h1M171 410.5h1M171 418.5h1M171 425.5h1M171 432.5h1M171 439.5h1M171 446.5h1M171 453.5h1M171 460.5h1M171 467.5h1M171 475.5h1M171 482.5h1M171 489.5h1M171 496.5h1M171 503.5h1M171 510.5h1M171 517.5h1M171 524.5h1M171 531.5h1M189 282.5h1M189 318.5h1M189 353.5h1M189 389.5h1M189 425.5h1M189 460.5h1M189 496.5h1M208 282.5h1M208 318.5h1M208 353.5h1M208 389.5h1M208 425.5h1M208 460.5h1M208 496.5h1M226 282.5h1M226 318.5h1M226 353.5h1M226 389.5h1M226 425.5h1M226 460.5h1M226 496.5h1M245 282.5h1M245 318.5h1M245 353.5h1M245 389.5h1M245 425.5h1M245 460.5h1M245 496.5h1M263 247.5h1M263 254.5h1M263 261.5h1M263 268.5h1M263 275.5h1M263 282.5h1M263 289.5h1M263 296.5h1M263 304.5h1M263 311.5h1M263 318.5h1M263 325.5h1M263 332.5h1M263 339.5h1M263 346.5h1M263 353.5h1M263 361.5h1M263 368.5h1M263 375.5h1M263 382.5h1M263 389.5h1M263 396.5h1M263 403.5h1M263 410.5h1M263 418.5h1M263 425.5h1M263 432.5h1M263 439.5h1M263 446.5h1M263 453.5h1M263 460.5h1M263 467.5h1M263 475.5h1M263 482.5h1M263 489.5h1M263 496.5h1M263 503.5h1M263 510.5h1M263 517.5h1M263 524.5h1M263 531.5h1M282 282.5h1M282 318.5h1M282 353.5h1M282 389.5h1M282 425.5h1M282 460.5h1M282 496.5h1M300 282.5h1M300 318.5h1M300 353.5h1M300 389.5h1M300 425.5h1M300 460.5h1M300 496.5h1M319 282.5h1M319 318.5h1M319 353.5h1M319 389.5h1M319 425.5h1M319 460.5h1M319 496.5h1M337 282.5h1M337 318.5h1M337 353.5h1M337 389.5h1M337 425.5h1M337 460.5h1M337 496.5h1M356 247.5h1M356 254.5h1M356 261.5h1M356 268.5h1M356 275.5h1M356 282.5h1M356 289.5h1M356 296.5h1M356 304.5h1M356 311.5h1M356 318.5h1M356 325.5h1M356 332.5h1M356 339.5h1M356 346.5h1M356 353.5h1M356 361.5h1M356 368.5h1M356 375.5h1M356 382.5h1M356 389.5h1M356 396.5h1M356 403.5h1M356 410.5h1M356 418.5h1M356 425.5h1M356 432.5h1M356 439.5h1M356 446.5h1M356 453.5h1M356 460.5h1M356 467.5h1M356 475.5h1M356 482.5h1M356 489.5h1M356 496.5h1M356 503.5h1M356 510.5h1M356 517.5h1M356 524.5h1M356 531.5h1M374 282.5h1M374 318.5h1M374 353.5h1M374 389.5h1M374 425.5h1M374 460.5h1M374 496.5h1M393 282.5h1M393 318.5h1M393 353.5h1M393 389.5h1M393 425.5h1M393 460.5h1M393 496.5h1M411 282.5h1M411 318.5h1M411 353.5h1M411 389.5h1M411 425.5h1M411 460.5h1M411 496.5h1M430 282.5h1M430 318.5h1M430 353.5h1M430 389.5h1M430 425.5h1M430 460.5h1M430 496.5h1M448 247.5h1M448 254.5h1M448 261.5h1M448 268.5h1M448 275.5h1M448 282.5h1M448 289.5h1M448 296.5h1M448 304.5h1M448 311.5h1M448 318.5h1M448 325.5h1M448 332.5h1M448 339.5h1M448 346.5h1M448 353.5h1M448 361.5h1M448 368.5h1M448 375.5h1M448 382.5h1M448 389.5h1M448 396.5h1M448 403.5h1M448 410.5h1M448 418.5h1M448 425.5h1M448 432.5h1M448 439.5h1M448 446.5h1M448 453.5h1M448 460.5h1M448 467.5h1M448 475.5h1M448 482.5h1M448 489.5h1M448 496.5h1M448 503.5h1M448 510.5h1M448 517.5h1M448 524.5h1M448 531.5h1M467 282.5h1M467 318.5h1M467 353.5h1M467 389.5h1M467 425.5h1M467 460.5h1M467 496.5h1M485 282.5h1M485 318.5h1M485 353.5h1M485 389.5h1M485 425.5h1M485 460.5h1M485 496.5h1M504 282.5h1M504 318.5h1M504 353.5h1M504 389.5h1M504 425.5h1M504 460.5h1M504 496.5h1M522 282.5h1M522 318.5h1M522 353.5h1M522 389.5h1M522 425.5h1M522 460.5h1M522 496.5h1M541 247.5h1M541 254.5h1M541 261.5h1M541 268.5h1M541 275.5h1M541 282.5h1M541 289.5h1M541 296.5h1M541 304.5h1M541 311.5h1M541 318.5h1M541 325.5h1M541 332.5h1M541 339.5h1M541 346.5h1M541 353.5h1M541 361.5h1M541 368.5h1M541 375.5h1M541 382.5h1M541 389.5h1M541 396.5h1M541 403.5h1M541 410.5h1M541 418.5h1M541 425.5h1M541 432.5h1M541 439.5h1M541 446.5h1M541 453.5h1M541 460.5h1M541 467.5h1M541 475.5h1M541 482.5h1M541 489.5h1M541 496.5h1M541 503.5h1M541 510.5h1M541 517.5h1M541 524.5h1M541 531.5h1M559 282.5h1M559 318.5h1M559 353.5h1M559 389.5h1M559 425.5h1M559 460.5h1M559 496.5h1M577 282.5h1M577 318.5h1M577 353.5h1M577 389.5h1M577 425.5h1M577 460.5h1M577 496.5h1M596 282.5h1M596 318.5h1M596 353.5h1M596 389.5h1M596 425.5h1M596 460.5h1M596 496.5h1M614 282.5h1M614 318.5h1M614 353.5h1M614 389.5h1M614 425.5h1M614 460.5h1M614 496.5h1M633 247.5h1M633 254.5h1M633 261.5h1M633 268.5h1M633 275.5h1M633 282.5h1M633 289.5h1M633 296.5h1M633 304.5h1M633 311.5h1M633 318.5h1M633 325.5h1M633 332.5h1M633 339.5h1M633 346.5h1M633 353.5h1M633 361.5h1M633 368.5h1M633 375.5h1M633 382.5h1M633 389.5h1M633 396.5h1M633 403.5h1M633 410.5h1M633 418.5h1M633 425.5h1M633 432.5h1M633 439.5h1M633 446.5h1M633 453.5h1M633 460.5h1M633 467.5h1M633 475.5h1M633 482.5h1M633 489.5h1M633 496.5h1M633 503.5h1M633 510.5h1M633 517.5h1M633 524.5h1M633 531.5h1M651 282.5h1M651 318.5h1M651 353.5h1M651 389.5h1M651 425.5h1M651 460.5h1M651 496.5h1M670 282.5h1M670 318.5h1M670 353.5h1M670 389.5h1M670 425.5h1M670 460.5h1M670 496.5h1M688 282.5h1M688 318.5h1M688 353.5h1M688 389.5h1M688 425.5h1M688 460.5h1M688 496.5h1M707 282.5h1M707 318.5h1M707 353.5h1M707 389.5h1M707 425.5h1M707 460.5h1M707 496.5h1M725 247.5h1M725 254.5h1M725 261.5h1M725 268.5h1M725 275.5h1M725 282.5h1M725 289.5h1M725 296.5h1M725 304.5h1M725 311.5h1M725 318.5h1M725 325.5h1M725 332.5h1M725 339.5h1M725 346.5h1M725 353.5h1M725 361.5h1M725 368.5h1M725 375.5h1M725 382.5h1M725 389.5h1M725 396.5h1M725 403.5h1M725 410.5h1M725 418.5h1M725 425.5h1M725 432.5h1M725 439.5h1M725 446.5h1M725 453.5h1M725 460.5h1M725 467.5h1M725 475.5h1M725 482.5h1M725 489.5h1M725 496.5h1M725 503.5h1M725 510.5h1M725 517.5h1M725 524.5h1M725 531.5h1M744 282.5h1M744 318.5h1M744 353.5h1M744 389.5h1M744 425.5h1M744 460.5h1M744 496.5h1M762 282.5h1M762 318.5h1M762 353.5h1M762 389.5h1M762 425.5h1M762 460.5h1M762 496.5h1M781 282.5h1M781 318.5h1M781 353.5h1M781 389.5h1M781 425.5h1M781 460.5h1M781 496.5h1M799 282.5h1M799 318.5h1M799 353.5h1M799 389.5h1M799 425.5h1M799 460.5h1M799 496.5h1M818 247.5h1M818 254.5h1M818 261.5h1M818 268.5h1M818 275.5h1M818 282.5h1M818 289.5h1M818 296.5h1M818 304.5h1M818 311.5h1M818 318.5h1M818 325.5h1M818 332.5h1M818 339.5h1M818 346.5h1M818 353.5h1M818 361.5h1M818 368.5h1M818 375.5h1M818 382.5h1M818 389.5h1M818 396.5h1M818 403.5h1M818 410.5h1M818 418.5h1M818 425.5h1M818 432.5h1M818 439.5h1M818 446.5h1M818 453.5h1M818 460.5h1M818 467.5h1M818 475.5h1M818 482.5h1M818 489.5h1M818 496.5h1M818 503.5h1M818 510.5h1M818 517.5h1M818 524.5h1M818 531.5h1M836 282.5h1M836 318.5h1M836 353.5h1M836 389.5h1M836 425.5h1M836 460.5h1M836 496.5h1M855 282.5h1M855 318.5h1M855 353.5h1M855 389.5h1M855 425.5h1M855 460.5h1M855 496.5h1M873 282.5h1M873 318.5h1M873 353.5h1M873 389.5h1M873 425.5h1M873 460.5h1M873 496.5h1M892 282.5h1M892 318.5h1M892 353.5h1M892 389.5h1M892 425.5h1M892 460.5h1M892 496.5h1M910 247.5h1M910 254.5h1M910 261.5h1M910 268.5h1M910 275.5h1M910 282.5h1M910 289.5h1M910 296.5h1M910 304.5h1M910 311.5h1M910 318.5h1M910 325.5h1M910 332.5h1M910 339.5h1M910 346.5h1M910 353.5h1M910 361.5h1M910 368.5h1M910 375.5h1M910 382.5h1M910 389.5h1M910 396.5h1M910 403.5h1M910 410.5h1M910 418.5h1M910 425.5h1M910 432.5h1M910 439.5h1M910 446.5h1M910 453.5h1M910 460.5h1M910 467.5h1M910 475.5h1M910 482.5h1M910 489.5h1M910 496.5h1M910 503.5h1M910 510.5h1M910 517.5h1M910 524.5h1M910 531.5h1M929 282.5h1M929 318.5h1M929 353.5h1M929 389.5h1M929 425.5h1M929 460.5h1M929 496.5h1M947 282.5h1M947 318.5h1M947 353.5h1M947 389.5h1M947 425.5h1M947 460.5h1M947 496.5h1M966 282.5h1M966 318.5h1M966 353.5h1M966 389.5h1M966 425.5h1M966 460.5h1M966 496.5h1M984 282.5h1M984 318.5h1M984 353.5h1M984 389.5h1M984 425.5h1M984 460.5h1M984 496.5h1M1002 282.5h1M1002 318.5h1M1002 353.5h1M1002 389.5h1M1002 425.5h1M1002 460.5h1M1002 496.5h1" stroke="#d8d8d8" stroke-width="1" shape-rendering="crispEdges" fill="none"/>
<polyline fill="none" stroke="#00ff00" stroke-width="1.4" shape-rendering="crispEdges" points="79.0,389.3 79.3,389.7 79.5,388.3 79.8,386.8 80.0,387.5 80.3,386.2 80.5,388.2 80.8,390.6 81.1,386.6 81.3,386.2 81.6,388.2 81.8,387.8 82.1,387.1 82.3,384.7 82.6,386.4 82.9,387.6 83.1,383.3 83.4,384.9 83.6,381.7 83.9,382.8 84.1,381.4 84.4,384.5 84.6,382.2 84.9,385.1 85.2,384.7 85.4,383.8 85.7,378.8 85.9,382.7 86.2,383.4 86.4,383.6 86.7,380.0 87.0,381.9 87.2,380.7 87.5,380.9 87.7,384.5 88.0,380.4 88.2,381.8 88.5,383.5 88.8,380.3 89.0,381.0 89.3,381.3 89.5,381.0 89.8,378.1 90.0,380.6 90.3,383.0 90.6,376.9 90.8,381.6 91.1,379.9 91.3,378.1 91.6,383.3 91.8,380.6 92.1,376.3 92.4,378.7 92.6,379.6 92.9,377.8 93.1,379.4 93.4,377.6 93.6,378.9 93.9,380.3 94.1,375.7 94.4,377.3 94.7,375.8 94.9,376.8 95.2,373.9 95.4,374.9 95.7,375.5 95.9,377.5 96.2,377.8 96.5,372.6 96.7,373.4 97.0,376.2 97.2,370.6 97.5,373.5 97.7,374.1 98.0,376.6 98.3,375.3 98.5,373.0 98.8,372.7 99.0,372.7 99.3,376.2 99.5,371.9 99.8,372.0 100.1,373.1 100.3,372.0 100.6,371.6 100.8,369.5 101.1,371.6 101.3,370.5 101.6,373.6 101.8,372.3 102.1,370.8 102.4,372.0 102.6,369.7 102.9,372.4 103.1,370.0 103.4,371.0 103.6,367.0 103.9,370.1 104.2,365.7 104.4,364.8 104.7,368.2 104.9,366.8 105.2,368.8 105.4,372.8 105.7,366.3 106.0,366.6 106.2,368.1 106.5,368.5 106.7,366.9 107.0,366.6 107.2,368.3 107.5,367.7 107.8,364.4 108.0,366.1 108.3,366.2 108.5,363.7 108.8,366.2 109.0,363.8 109.3,367.3 109.6,365.5 109.8,365.1 110.1,363.5 110.3,364.3 110.6,360.3 110.8,361.9 111.1,364.7 111.3,359.5 111.6,365.4 111.9,359.9 112.1,364.8 112.4,361.3 112.6,364.5 112.9,363.0 113.1,359.4 113.4,364.9 113.7,365.1 113.9,361.8 114.2,361.2 114.4,361.3 114.7,359.4 114.9,363.5 115.2,360.0 115.5,360.8 115.7,359.1 116.0,359.3 116.2,357.8 116.5,362.8 116.7,359.7 117.0,361.8 117.3,359.7 117.5,358.1 117.8,358.7 118.0,358.0 118.3,359.0 118.5,358.0 118.8,358.0 119.1,355.6 119.3,356.7 119.6,361.5 119.8,356.6 120.1,355.6 120.3,358.3 120.6,360.4 120.8,354.3 121.1,356.7 121.4,355.7 121.6,353.2 121.9,358.2 122.1,356.4 122.4,356.5 122.6,354.6 122.9,357.0 123.2,354.8 123.4,355.4 123.7,353.3 123.9,352.9 124.2,358.0 124.4,354.0 124.7,355.5 125.0,354.7 125.2,353.7 125.5,353.4 125.7,355.6 126.0,353.6 126.2,353.7 126.5,353.9 126.8,356.1 127.0,355.0 127.3,354.2 127.5,352.1 127.8,350.3 128.0,354.9 128.3,354.8 128.6,352.4 128.8,353.7 129.1,354.0 129.3,354.0 129.6,354.0 129.8,351.1 130.1,355.0 130.3,349.2 130.6,353.4 130.9,352.5 131.1,353.1 131.4,355.1 131.6,354.1 131.9,348.6 132.1,347.4 132.4,352.4 132.7,348.5 132.9,350.4 133.2,352.0 133.4,346.8 133.7,345.7 133.9,350.5 134.2,349.9 134.5,349.2 134.7,349.7 135.0,347.7 135.2,346.2 135.5,348.9 135.7,347.1 136.0,345.6 136.3,349.9 136.5,348.6 136.8,349.5 137.0,346.5 137.3,347.1 137.5,346.3 137.8,346.4 138.0,348.5 138.3,346.4 138.6,348.6 138.8,348.5 139.1,351.8 139.3,344.7 139.6,349.3 139.8,347.2 140.1,347.2 140.4,344.2 140.6,346.1 140.9,348.5 141.1,346.7 141.4,347.0 141.6,346.1 141.9,349.0 142.2,346.5 142.4,341.9 142.7,344.9 142.9,342.2 143.2,339.5 143.4,345.0 143.7,348.7 144.0,346.0 144.2,343.4 144.5,343.8 144.7,348.0 145.0,345.9 145.2,345.6 145.5,345.3 145.8,345.4 146.0,346.9 146.3,346.3 146.5,345.5 146.8,342.9 147.0,346.0 147.3,343.5 147.5,347.1 147.8,342.1 148.1,344.4 148.3,344.6 148.6,341.8 148.8,348.0 149.1,347.4 149.3,343.4 149.6,345.9 149.9,345.0 150.1,338.8 150.4,344.6 150.6,343.9 150.9,344.2 151.1,341.7 151.4,343.3 151.7,343.5 151.9,346.2 152.2,344.4 152.4,343.7 152.7,346.8 152.9,342.5 153.2,342.7 153.5,339.8 153.7,346.7 154.0,345.4 154.2,345.3 154.5,344.7 154.7,343.5 155.0,343.7 155.3,342.7 155.5,342.8 155.8,343.3 156.0,346.2 156.3,344.2 156.5,342.9 156.8,341.8 157.0,341.7 157.3,346.2 157.6,344.0 157.8,343.1 158.1,342.2 158.3,340.6 158.6,342.7 158.8,344.6 159.1,342.0 159.4,342.3 159.6,342.3 159.9,343.0 160.1,339.5 160.4,342.2 160.6,341.0 160.9,344.5 161.2,341.1 161.4,343.9 161.7,345.8 161.9,342.0 162.2,341.4 162.4,343.0 162.7,342.6 163.0,340.6 163.2,343.6 163.5,346.8 163.7,342.1 164.0,342.2 164.2,340.5 164.5,343.3 164.8,340.1 165.0,340.4 165.3,345.3 165.5,340.8 165.8,344.9 166.0,345.8 166.3,343.2 166.5,343.9 166.8,346.7 167.1,342.3 167.3,341.6 167.6,340.0 167.8,342.9 168.1,345.9 168.3,344.8 168.6,340.9 168.9,341.1 169.1,341.9 169.4,343.5 169.6,342.5 169.9,343.4 170.1,343.6 170.4,342.4 170.7,343.0 170.9,343.5 171.2,343.0 171.4,344.2 171.7,347.1 171.9,344.5 172.2,343.4 172.5,339.9 172.7,344.2 173.0,339.4 173.2,340.6 173.5,345.3 173.7,345.0 174.0,343.3 174.2,340.1 174.5,342.9 174.8,342.4 175.0,345.1 175.3,348.5 175.5,344.3 175.8,342.4 176.0,341.6 176.3,343.9 176.6,343.8 176.8,341.8 177.1,344.5 177.3,341.9 177.6,346.6 177.8,346.6 178.1,346.7 178.4,343.6 178.6,345.7 178.9,344.4 179.1,344.0 179.4,344.1 179.6,342.2 179.9,342.0 180.2,346.7 180.4,344.7 180.7,345.6 180.9,347.3 181.2,341.8 181.4,343.8 181.7,345.9 182.0,346.4 182.2,344.9 182.5,347.9 182.7,346.3 183.0,343.4 183.2,344.1 183.5,347.7 183.7,347.1 184.0,342.4 184.3,349.1 184.5,347.7 184.8,349.3 185.0,345.8 185.3,346.1 185.5,344.5 185.8,352.1 186.1,346.6 186.3,350.4 186.6,345.9 186.8,347.6 187.1,344.0 187.3,346.7 187.6,349.6 187.9,345.1 188.1,350.0 188.4,348.6 188.6,345.9 188.9,347.1 189.1,347.3 189.4,348.3 189.7,347.4 189.9,346.9 190.2,348.1 190.4,346.7 190.7,346.3 190.9,348.9 191.2,351.0 191.5,346.1 191.7,349.4 192.0,348.2 192.2,347.6 192.5,351.5 192.7,348.8 193.0,353.1 193.2,348.5 193.5,351.0 193.8,349.9 194.0,349.0 194.3,351.8 194.5,350.4 194.8,352.1 195.0,350.9 195.3,348.9 195.6,351.1 195.8,351.5 196.1,353.5 196.3,349.8 196.6,351.7 196.8,348.4 197.1,353.4 197.4,350.0 197.6,348.7 197.9,352.4 198.1,354.9 198.4,349.7 198.6,350.7 198.9,351.6 199.2,350.9 199.4,354.2 199.7,351.9 199.9,352.2 200.2,355.0 200.4,352.4 200.7,355.0 201.0,352.3 201.2,351.9 201.5,350.8 201.7,358.5 202.0,354.2 202.2,355.5 202.5,355.1 202.7,355.7 203.0,355.6 203.3,359.6 203.5,353.7 203.8,352.8 204.0,354.1 204.3,353.6 204.5,358.0 204.8,358.3 205.1,354.8 205.3,354.1 205.6,356.4 205.8,360.1 206.1,351.7 206.3,358.7 206.6,355.6 206.9,360.1 207.1,355.9 207.4,357.7 207.6,355.4 207.9,356.6 208.1,361.6 208.4,360.6 208.7,358.3 208.9,357.5 209.2,355.6 209.4,358.9 209.7,359.8 209.9,359.8 210.2,360.0 210.4,358.1 210.7,360.4 211.0,360.6 211.2,363.6 211.5,364.9 211.7,361.0 212.0,359.9 212.2,361.5 212.5,360.6 212.8,360.5 213.0,362.1 213.3,360.2 213.5,363.8 213.8,362.5 214.0,363.4 214.3,362.7 214.6,361.8 214.8,361.5 215.1,363.2 215.3,362.7 215.6,364.5 215.8,364.2 216.1,361.6 216.4,364.8 216.6,362.1 216.9,363.7 217.1,364.6 217.4,361.1 217.6,365.8 217.9,366.1 218.2,365.6 218.4,365.3 218.7,365.6 218.9,364.5 219.2,366.2 219.4,365.8 219.7,367.3 219.9,364.9 220.2,368.0 220.5,368.0 220.7,367.6 221.0,367.2 221.2,369.5 221.5,365.1 221.7,369.7 222.0,369.4 222.3,369.7 222.5,370.1 222.8,368.2 223.0,369.2 223.3,371.2 223.5,371.0 223.8,370.8 224.1,367.4 224.3,371.9 224.6,373.4 224.8,373.2 225.1,371.8 225.3,368.4 225.6,373.7 225.9,371.7 226.1,367.0 226.4,373.2 226.6,369.5 226.9,370.1 227.1,371.7 227.4,375.8 227.7,372.7 227.9,374.2 228.2,377.4 228.4,377.3 228.7,374.0 228.9,374.0 229.2,372.1 229.4,373.5 229.7,376.0 230.0,376.1 230.2,375.7 230.5,377.8 230.7,374.4 231.0,376.0 231.2,377.9 231.5,377.8 231.8,379.0 232.0,377.8 232.3,376.6 232.5,378.2 232.8,375.6 233.0,374.5 233.3,379.2 233.6,378.1 233.8,379.1 234.1,375.2 234.3,378.1 234.6,377.9 234.8,377.5 235.1,374.9 235.4,379.1 235.6,381.8 235.9,380.9 236.1,379.1 236.4,380.6 236.6,382.4 236.9,375.4 237.2,381.0 237.4,382.6 237.7,383.1 237.9,385.4 238.2,384.4 238.4,382.9 238.7,383.1 238.9,384.3 239.2,381.8 239.5,383.1 239.7,385.2 240.0,387.6 240.2,383.5 240.5,383.9 240.7,384.6 241.0,387.2 241.3,384.6 241.5,387.9 241.8,383.1 242.0,384.9 242.3,385.1 242.5,387.3 242.8,388.0 243.1,383.0 243.3,384.4 243.6,387.2 243.8,385.4 244.1,383.8 244.3,389.3 244.6,388.4 244.9,388.6 245.1,386.8 245.4,390.1 245.6,387.7 245.9,390.7 246.1,386.8 246.4,387.1 246.6,389.5 246.9,387.8 247.2,390.9 247.4,390.2 247.7,388.0 247.9,390.2 248.2,389.6 248.4,392.4 248.7,389.4 249.0,390.0 249.2,393.6 249.5,395.9 249.7,395.6 250.0,391.9 250.2,392.4 250.5,395.3 250.8,392.1 251.0,390.6 251.3,393.0 251.5,393.9 251.8,391.5 252.0,390.0 252.3,390.6 252.6,395.2 252.8,392.4 253.1,393.9 253.3,394.8 253.6,395.9 253.8,394.1 254.1,396.0 254.4,393.4 254.6,394.7 254.9,393.5 255.1,398.1 255.4,395.9 255.6,394.7 255.9,395.7 256.1,396.1 256.4,398.2 256.7,393.7 256.9,395.1 257.2,396.6 257.4,402.8 257.7,399.7 257.9,397.7 258.2,399.6 258.5,402.6 258.7,398.1 259.0,398.0 259.2,401.4 259.5,400.1 259.7,400.7 260.0,398.5 260.3,403.6 260.5,403.4 260.8,401.2 261.0,401.7 261.3,396.3 261.5,401.9 261.8,400.4 262.1,401.9 262.3,402.6 262.6,400.7 262.8,398.1 263.1,402.5 263.3,400.4 263.6,401.4 263.9,401.0 264.1,401.8 264.4,397.9 264.6,405.3 264.9,403.5 265.1,405.5 265.4,407.4 265.6,403.6 265.9,400.0 266.2,402.1 266.4,401.6 266.7,403.2 266.9,404.6 267.2,400.5 267.4,405.5 267.7,401.8 268.0,405.7 268.2,405.1 268.5,404.8 268.7,405.5 269.0,404.7 269.2,404.7 269.5,402.7 269.8,406.2 270.0,410.2 270.3,410.7 270.5,409.5 270.8,408.4 271.0,405.7 271.3,410.2 271.6,407.3 271.8,407.5 272.1,407.2 272.3,408.1 272.6,407.2 272.8,408.1 273.1,406.2 273.4,407.8 273.6,413.4 273.9,408.7 274.1,408.5 274.4,410.3 274.6,410.8 274.9,407.2 275.1,409.2 275.4,411.6 275.7,410.5 275.9,410.3 276.2,413.4 276.4,409.0 276.7,410.7 276.9,409.6 277.2,413.8 277.5,406.9 277.7,409.7 278.0,410.1 278.2,412.7 278.5,412.7 278.7,414.5 279.0,408.5 279.3,413.4 279.5,411.4 279.8,410.8 280.0,413.4 280.3,410.6 280.5,408.3 280.8,412.0 281.1,409.8 281.3,411.6 281.6,413.9 281.8,413.9 282.1,416.6 282.3,413.1 282.6,410.5 282.8,412.2 283.1,412.0 283.4,411.5 283.6,415.0 283.9,412.9 284.1,410.3 284.4,415.9 284.6,414.3 284.9,415.4 285.2,415.0 285.4,416.2 285.7,415.1 285.9,417.7 286.2,416.1 286.4,416.2 286.7,416.3 287.0,412.6 287.2,415.4 287.5,415.3 287.7,416.3 288.0,413.2 288.2,419.5 288.5,416.4 288.8,413.8 289.0,412.9 289.3,415.9 289.5,416.4 289.8,415.3 290.0,417.0 290.3,415.6 290.6,418.1 290.8,415.6 291.1,417.1 291.3,419.3 291.6,422.7 291.8,415.4 292.1,416.6 292.3,415.9 292.6,419.3 292.9,415.5 293.1,416.9 293.4,417.9 293.6,416.1 293.9,416.2 294.1,417.3 294.4,414.0 294.7,415.4 294.9,417.6 295.2,418.8 295.4,418.2 295.7,415.0 295.9,417.8 296.2,420.5 296.5,420.0 296.7,418.8 297.0,417.2 297.2,420.4 297.5,418.0 297.7,416.8 298.0,417.7 298.3,422.3 298.5,419.9 298.8,421.9 299.0,418.6 299.3,421.5 299.5,418.4 299.8,419.4 300.1,424.9 300.3,421.4 300.6,418.8 300.8,419.7 301.1,420.6 301.3,422.5 301.6,419.1 301.8,416.5 302.1,419.6 302.4,420.2 302.6,420.5 302.9,423.0 303.1,421.0 303.4,422.0 303.6,418.2 303.9,422.2 304.2,424.8 304.4,422.1 304.7,421.1 304.9,420.9 305.2,424.3 305.4,418.8 305.7,420.5 306.0,421.7 306.2,422.3 306.5,419.9 306.7,421.4 307.0,420.2 307.2,421.1 307.5,420.6 307.8,418.5 308.0,420.9 308.3,422.7 308.5,419.0 308.8,420.5 309.0,422.3 309.3,418.8 309.6,421.4 309.8,418.8 310.1,423.3 310.3,425.8 310.6,425.2 310.8,420.6 311.1,422.6 311.3,421.3 311.6,421.3 311.9,424.2 312.1,418.4 312.4,423.2 312.6,421.0 312.9,423.9 313.1,421.4 313.4,419.7 313.7,421.6 313.9,422.6 314.2,421.1 314.4,422.0 314.7,419.9 314.9,416.6 315.2,422.8 315.5,422.4 315.7,421.3 316.0,421.1 316.2,423.1 316.5,420.0 316.7,419.4 317.0,420.5 317.3,423.3 317.5,418.0 317.8,423.2 318.0,419.5 318.3,418.5 318.5,423.3 318.8,420.5 319.1,418.0 319.3,419.9 319.6,422.5 319.8,423.0 320.1,419.7 320.3,421.3 320.6,421.9 320.8,419.1 321.1,421.1 321.4,420.3 321.6,419.2 321.9,419.3 322.1,420.4 322.4,420.2 322.6,419.0 322.9,419.2 323.2,422.3 323.4,420.4 323.7,421.8 323.9,422.4 324.2,421.0 324.4,424.4 324.7,418.0 325.0,421.3 325.2,419.0 325.5,423.4 325.7,423.0 326.0,415.4 326.2,417.4 326.5,420.7 326.8,420.9 327.0,420.7 327.3,419.0 327.5,420.0 327.8,420.3 328.0,418.8 328.3,421.0 328.5,414.1 328.8,420.0 329.1,416.5 329.3,420.5 329.6,418.0 329.8,416.6 330.1,419.1 330.3,416.4 330.6,416.3 330.9,414.9 331.1,418.0 331.4,418.9 331.6,419.9 331.9,417.5 332.1,419.8 332.4,417.6 332.7,417.3 332.9,418.6 333.2,419.5 333.4,416.5 333.7,416.6 333.9,416.7 334.2,417.1 334.5,415.0 334.7,418.9 335.0,415.8 335.2,417.5 335.5,414.8 335.7,417.1 336.0,417.1 336.3,415.3 336.5,420.2 336.8,416.7 337.0,419.5 337.3,417.7 337.5,414.3 337.8,414.7 338.0,416.3 338.3,415.4 338.6,415.3 338.8,414.5 339.1,411.3 339.3,414.4 339.6,410.2 339.8,415.4 340.1,413.0 340.4,412.9 340.6,413.8 340.9,414.7 341.1,411.1 341.4,410.3 341.6,411.6 341.9,409.5 342.2,411.6 342.4,416.7 342.7,411.1 342.9,414.5 343.2,410.2 343.4,413.5 343.7,412.1 344.0,412.5 344.2,413.7 344.5,416.0 344.7,412.6 345.0,412.4 345.2,410.0 345.5,413.0 345.8,411.2 346.0,413.3 346.3,411.3 346.5,414.9 346.8,407.1 347.0,410.4 347.3,412.7 347.5,410.0 347.8,409.0 348.1,409.9 348.3,407.5 348.6,410.4 348.8,415.0 349.1,412.2 349.3,407.4 349.6,407.8 349.9,408.6 350.1,411.3 350.4,407.4 350.6,407.5 350.9,410.6 351.1,410.4 351.4,407.7 351.7,406.0 351.9,405.0 352.2,406.6 352.4,403.3 352.7,409.2 352.9,406.2 353.2,408.4 353.5,411.0 353.7,409.5 354.0,404.5 354.2,408.5 354.5,408.9 354.7,404.9 355.0,404.3 355.3,405.8 355.5,402.6 355.8,408.7 356.0,400.6 356.3,403.1 356.5,404.7 356.8,404.6 357.0,405.2 357.3,405.3 357.6,404.1 357.8,406.7 358.1,399.8 358.3,404.0 358.6,402.4 358.8,403.9 359.1,403.9 359.4,401.4 359.6,401.8 359.9,404.6 360.1,403.5 360.4,401.2 360.6,406.6 360.9,407.0 361.2,399.1 361.4,402.5 361.7,406.8 361.9,403.1 362.2,401.8 362.4,400.7 362.7,399.9 363.0,400.3 363.2,399.5 363.5,401.9 363.7,399.4 364.0,399.1 364.2,397.4 364.5,399.6 364.7,397.6 365.0,398.9 365.3,401.2 365.5,399.6 365.8,399.7 366.0,399.2 366.3,398.4 366.5,397.9 366.8,397.3 367.1,399.3 367.3,395.3 367.6,400.1 367.8,397.2 368.1,395.4 368.3,395.8 368.6,395.2 368.9,396.7 369.1,394.7 369.4,398.3 369.6,394.2 369.9,390.9 370.1,393.9 370.4,391.1 370.7,394.9 370.9,397.0 371.2,395.9 371.4,391.7 371.7,392.6 371.9,397.6 372.2,394.5 372.5,393.6 372.7,395.6 373.0,398.2 373.2,395.7 373.5,393.1 373.7,393.3 374.0,393.7 374.2,390.9 374.5,389.8 374.8,391.9 375.0,389.6 375.3,391.2 375.5,391.4 375.8,395.8 376.0,389.0 376.3,390.3 376.6,390.0 376.8,391.0 377.1,392.1 377.3,388.7 377.6,387.8 377.8,385.9 378.1,387.2 378.4,390.0 378.6,388.8 378.9,386.4 379.1,387.5 379.4,388.1 379.6,388.9 379.9,386.4 380.2,386.9 380.4,383.5 380.7,384.7 380.9,390.1 381.2,382.1 381.4,385.7 381.7,386.6 382.0,385.2 382.2,384.1 382.5,385.4 382.7,385.3 383.0,385.0 383.2,381.1 383.5,384.4 383.7,382.8 384.0,383.2 384.3,384.6 384.5,385.2 384.8,385.5 385.0,382.4 385.3,385.1 385.5,385.4 385.8,385.2 386.1,385.5 386.3,382.1 386.6,381.8 386.8,383.7 387.1,379.0 387.3,382.0 387.6,380.3 387.9,380.4 388.1,377.4 388.4,378.9 388.6,380.5 388.9,382.1 389.1,382.1 389.4,379.7 389.7,379.3 389.9,377.8 390.2,380.1 390.4,378.5 390.7,380.1 390.9,382.2 391.2,378.4 391.5,375.1 391.7,376.2 392.0,374.8 392.2,375.1 392.5,380.1 392.7,377.6 393.0,373.9 393.2,378.1 393.5,379.1 393.8,375.6 394.0,374.8 394.3,375.2 394.5,376.3 394.8,376.8 395.0,377.7 395.3,377.6 395.6,377.3 395.8,377.5 396.1,375.8 396.3,371.1 396.6,373.8 396.8,374.5 397.1,372.9 397.4,375.3 397.6,372.5 397.9,371.2 398.1,375.8 398.4,374.0 398.6,372.9 398.9,374.1 399.2,374.2 399.4,372.5 399.7,366.6 399.9,370.1 400.2,370.3 400.4,369.0 400.7,371.2 400.9,373.1 401.2,369.4 401.5,367.9 401.7,374.2 402.0,368.9 402.2,367.1 402.5,369.9 402.7,370.1 403.0,367.6 403.3,370.5 403.5,367.7 403.8,366.6 404.0,368.6 404.3,369.7 404.5,366.6 404.8,368.4 405.1,367.3 405.3,373.1 405.6,365.7 405.8,369.8 406.1,366.6 406.3,366.3 406.6,367.8 406.9,368.0 407.1,368.6 407.4,366.4 407.6,364.4 407.9,364.3 408.1,366.3 408.4,366.2 408.7,367.7 408.9,365.5 409.2,366.6 409.4,367.4 409.7,364.4 409.9,360.9 410.2,361.3 410.4,360.6 410.7,366.6 411.0,361.4 411.2,365.5 411.5,364.0 411.7,366.2 412.0,364.5 412.2,362.1 412.5,361.7 412.8,362.1 413.0,362.1 413.3,360.5 413.5,361.3 413.8,364.5 414.0,357.6 414.3,361.4 414.6,358.8 414.8,360.9 415.1,362.1 415.3,360.1 415.6,361.6 415.8,356.6 416.1,361.9 416.4,358.3 416.6,360.6 416.9,359.6 417.1,353.7 417.4,357.3 417.6,359.1 417.9,361.7 418.2,358.9 418.4,358.7 418.7,355.1 418.9,360.8 419.2,361.4 419.4,357.6 419.7,356.9 419.9,353.9 420.2,358.9 420.5,362.5 420.7,358.2 421.0,359.2 421.2,357.6 421.5,354.3 421.7,358.9 422.0,353.5 422.3,355.4 422.5,356.3 422.8,357.4 423.0,356.2 423.3,356.0 423.5,353.5 423.8,352.3 424.1,354.9 424.3,353.2 424.6,351.8 424.8,351.8 425.1,353.2 425.3,350.3 425.6,351.2 425.9,350.5 426.1,354.0 426.4,354.4 426.6,357.5 426.9,350.2 427.1,351.7 427.4,354.9 427.7,352.4 427.9,352.1 428.2,356.1 428.4,351.8 428.7,350.0 428.9,349.5 429.2,352.8 429.4,352.6 429.7,349.0 430.0,349.7 430.2,352.7 430.5,352.6 430.7,350.0 431.0,352.5 431.2,352.3 431.5,347.3 431.8,350.2 432.0,351.6 432.3,349.4 432.5,346.1 432.8,349.8 433.0,351.8 433.3,353.4 433.6,345.5 433.8,355.3 434.1,347.5 434.3,351.7 434.6,352.1 434.8,351.5 435.1,349.7 435.4,346.9 435.6,350.5 435.9,347.6 436.1,343.8 436.4,354.7 436.6,350.2 436.9,352.4 437.1,346.7 437.4,351.5 437.7,351.6 437.9,351.5 438.2,348.1 438.4,345.6 438.7,347.6 438.9,343.4 439.2,344.3 439.5,347.9 439.7,345.6 440.0,347.2 440.2,347.2 440.5,351.3 440.7,350.0 441.0,347.1 441.3,349.6 441.5,345.5 441.8,346.3 442.0,348.8 442.3,344.3 442.5,346.2 442.8,344.0 443.1,346.8 443.3,349.9 443.6,344.9 443.8,346.8 444.1,344.5 444.3,343.9 444.6,343.6 444.9,349.1 445.1,350.9 445.4,347.0 445.6,344.4 445.9,347.3 446.1,345.1 446.4,347.4 446.6,346.3 446.9,346.2 447.2,346.8 447.4,344.3 447.7,344.6 447.9,341.9 448.2,344.4 448.4,342.4 448.7,344.9 449.0,343.2 449.2,345.3 449.5,346.0 449.7,342.1 450.0,343.3 450.2,343.0 450.5,346.4 450.8,348.4 451.0,346.6 451.3,344.1 451.5,347.8 451.8,341.6 452.0,347.8 452.3,343.3 452.6,338.9 452.8,350.0 453.1,347.8 453.3,342.4 453.6,344.8 453.8,344.0 454.1,344.7 454.4,341.4 454.6,343.0 454.9,345.3 455.1,344.8 455.4,346.8 455.6,344.5 455.9,349.1 456.1,342.8 456.4,344.8 456.7,340.3 456.9,341.7 457.2,346.9 457.4,342.3 457.7,345.3 457.9,344.1 458.2,342.0 458.5,343.5 458.7,343.1 459.0,343.2 459.2,345.7 459.5,345.5 459.7,343.0 460.0,342.3 460.3,344.7 460.5,344.0 460.8,346.3 461.0,349.6 461.3,345.9 461.5,344.1 461.8,343.8 462.1,342.4 462.3,342.3 462.6,342.2 462.8,343.4 463.1,343.4 463.3,345.8 463.6,343.5 463.9,343.9 464.1,341.8 464.4,347.7 464.6,345.4 464.9,348.0 465.1,346.0 465.4,347.5 465.6,343.9 465.9,345.9 466.2,350.0 466.4,342.0 466.7,347.0 466.9,348.1 467.2,345.5 467.4,346.2 467.7,347.3 468.0,343.3 468.2,345.6 468.5,343.0 468.7,343.4 469.0,343.6 469.2,344.6 469.5,345.3 469.8,345.9 470.0,342.1 470.3,349.2 470.5,347.6 470.8,346.7 471.0,344.5 471.3,345.1 471.6,346.5 471.8,346.2 472.1,341.9 472.3,347.0 472.6,351.7 472.8,341.7 473.1,347.8 473.3,346.5 473.6,345.5 473.9,348.7 474.1,343.4 474.4,346.3 474.6,349.1 474.9,345.7 475.1,345.3 475.4,346.5 475.7,345.4 475.9,349.6 476.2,344.5 476.4,348.4 476.7,343.9 476.9,348.1 477.2,346.5 477.5,341.4 477.7,346.9 478.0,344.7 478.2,346.1 478.5,350.4 478.7,344.9 479.0,345.1 479.3,350.4 479.5,347.7 479.8,350.8 480.0,348.3 480.3,345.9 480.5,347.7 480.8,350.5 481.1,350.0 481.3,348.1 481.6,348.3 481.8,348.0 482.1,347.1 482.3,352.5 482.6,348.6 482.8,346.3 483.1,347.8 483.4,350.4 483.6,350.3 483.9,348.8 484.1,347.8 484.4,349.3 484.6,345.8 484.9,346.7 485.2,351.3 485.4,348.7 485.7,350.6 485.9,352.5 486.2,351.4 486.4,350.2 486.7,354.7 487.0,351.8 487.2,349.7 487.5,352.1 487.7,351.6 488.0,349.0 488.2,351.1 488.5,350.7 488.8,347.0 489.0,351.0 489.3,350.8 489.5,350.6 489.8,348.2 490.0,351.1 490.3,351.9 490.6,352.3 490.8,349.8 491.1,353.7 491.3,349.9 491.6,352.1 491.8,355.5 492.1,351.4 492.3,351.9 492.6,355.4 492.9,352.4 493.1,352.8 493.4,354.0 493.6,355.9 493.9,349.2 494.1,352.2 494.4,352.0 494.7,351.9 494.9,352.6 495.2,352.7 495.4,355.3 495.7,352.9 495.9,355.2 496.2,355.9 496.5,353.7 496.7,355.7 497.0,359.0 497.2,356.4 497.5,354.5 497.7,355.9 498.0,354.2 498.3,356.9 498.5,358.3 498.8,354.9 499.0,356.3 499.3,359.2 499.5,356.0 499.8,357.6 500.1,355.2 500.3,355.8 500.6,356.6 500.8,362.3 501.1,357.2 501.3,357.1 501.6,357.2 501.8,358.2 502.1,360.0 502.4,359.2 502.6,363.2 502.9,359.6 503.1,362.3 503.4,360.1 503.6,360.9 503.9,356.9 504.2,359.8 504.4,360.1 504.7,359.9 504.9,356.1 505.2,362.5 505.4,360.1 505.7,360.2 506.0,360.7 506.2,360.9 506.5,362.4 506.7,359.2 507.0,360.0 507.2,362.7 507.5,362.6 507.8,361.7 508.0,361.5 508.3,361.1 508.5,362.9 508.8,365.6 509.0,361.2 509.3,366.7 509.5,365.5 509.8,363.0 510.1,365.7 510.3,361.3 510.6,360.9 510.8,362.0 511.1,364.0 511.3,364.4 511.6,364.2 511.9,365.6 512.1,361.2 512.4,366.8 512.6,363.1 512.9,364.8 513.1,365.5 513.4,364.2 513.7,363.9 513.9,364.9 514.2,367.1 514.4,368.5 514.7,368.7 514.9,365.7 515.2,366.3 515.5,366.2 515.7,369.2 516.0,364.3 516.2,371.2 516.5,367.9 516.7,367.5 517.0,370.0 517.3,371.6 517.5,370.4 517.8,372.0 518.0,370.4 518.3,372.8 518.5,373.0 518.8,370.5 519.0,373.8 519.3,371.4 519.6,371.5 519.8,369.6 520.1,371.1 520.3,373.5 520.6,369.4 520.8,373.6 521.1,373.2 521.4,373.3 521.6,368.4 521.9,372.9 522.1,374.6 522.4,372.0 522.6,373.9 522.9,369.1 523.2,375.5 523.4,373.0 523.7,376.3 523.9,371.0 524.2,376.4 524.4,374.7 524.7,377.0 525.0,373.7 525.2,374.5 525.5,380.6 525.7,374.5 526.0,375.0 526.2,376.1 526.5,374.7 526.8,379.5 527.0,380.8 527.3,376.0 527.5,374.1 527.8,380.3 528.0,380.4 528.3,380.0 528.5,380.9 528.8,376.9 529.1,378.6 529.3,376.3 529.6,376.4 529.8,381.6 530.1,378.4 530.3,384.6 530.6,380.3 530.9,379.1 531.1,382.2 531.4,384.5 531.6,382.0 531.9,378.7 532.1,382.2 532.4,384.5 532.7,380.9 532.9,380.5 533.2,384.4 533.4,382.8 533.7,380.5 533.9,382.1 534.2,381.6 534.5,384.0 534.7,383.8 535.0,386.1 535.2,385.4 535.5,381.0 535.7,385.2 536.0,386.5 536.3,385.8 536.5,387.2 536.8,384.1 537.0,383.5 537.3,387.6 537.5,383.7 537.8,381.7 538.0,388.4 538.3,385.0 538.6,386.1 538.8,384.1 539.1,384.4 539.3,385.0 539.6,386.8 539.8,388.5 540.1,383.3 540.4,389.7 540.6,386.0 540.9,386.4 541.1,390.2 541.4,388.9 541.6,386.1 541.9,393.2 542.2,387.9 542.4,390.4 542.7,390.5 542.9,393.2 543.2,389.6 543.4,392.8 543.7,389.4 544.0,393.4 544.2,389.7 544.5,390.8 544.7,395.6 545.0,392.6 545.2,392.4 545.5,396.9 545.7,393.3 546.0,391.1 546.3,394.5 546.5,390.7 546.8,395.7 547.0,396.0 547.3,392.6 547.5,392.7 547.8,394.5 548.1,394.4 548.3,392.6 548.6,395.9 548.8,390.8 549.1,394.3 549.3,394.6 549.6,395.0 549.9,396.4 550.1,393.5 550.4,397.4 550.6,396.0 550.9,395.2 551.1,394.0 551.4,394.5 551.7,397.9 551.9,395.4 552.2,397.7 552.4,399.9 552.7,400.1 552.9,401.3 553.2,397.7 553.5,396.3 553.7,400.8 554.0,399.6 554.2,401.4 554.5,399.3 554.7,401.9 555.0,401.4 555.2,401.3 555.5,401.1 555.8,401.1 556.0,400.9 556.3,401.1 556.5,402.9 556.8,400.0 557.0,404.8 557.3,401.2 557.6,403.6 557.8,401.6 558.1,401.4 558.3,406.3 558.6,401.7 558.8,399.9 559.1,401.2 559.4,402.2 559.6,407.5 559.9,403.6 560.1,405.3 560.4,401.5 560.6,404.5 560.9,405.3 561.2,407.8 561.4,402.9 561.7,405.7 561.9,405.3 562.2,402.7 562.4,404.9 562.7,404.6 563.0,400.6 563.2,406.7 563.5,406.8 563.7,405.0 564.0,403.3 564.2,409.2 564.5,406.9 564.7,408.6 565.0,409.6 565.3,405.8 565.5,408.7 565.8,406.7 566.0,407.2 566.3,407.3 566.5,407.7 566.8,410.1 567.1,408.3 567.3,407.9 567.6,407.8 567.8,409.2 568.1,406.8 568.3,407.8 568.6,408.9 568.9,408.0 569.1,409.0 569.4,408.2 569.6,413.7 569.9,412.5 570.1,410.8 570.4,409.9 570.7,414.7 570.9,411.0 571.2,410.3 571.4,411.3 571.7,411.4 571.9,413.8 572.2,411.0 572.5,415.5 572.7,409.6 573.0,412.9 573.2,409.6 573.5,415.5 573.7,411.3 574.0,412.0 574.2,414.1 574.5,414.9 574.8,410.2 575.0,411.9 575.3,409.9 575.5,413.2 575.8,412.8 576.0,412.5 576.3,411.9 576.6,412.6 576.8,412.0 577.1,414.8 577.3,416.9 577.6,410.0 577.8,413.8 578.1,413.3 578.4,415.3 578.6,412.5 578.9,414.3 579.1,412.6 579.4,416.3 579.6,415.1 579.9,414.7 580.2,415.9 580.4,414.8 580.7,412.2 580.9,416.8 581.2,416.2 581.4,415.4 581.7,417.9 581.9,418.5 582.2,413.9 582.5,414.6 582.7,419.5 583.0,419.3 583.2,415.0 583.5,414.2 583.7,415.4 584.0,415.8 584.3,413.7 584.5,417.1 584.8,414.5 585.0,414.8 585.3,419.2 585.5,416.0 585.8,417.4 586.1,418.9 586.3,419.4 586.6,417.1 586.8,418.0 587.1,416.3 587.3,421.7 587.6,419.5 587.9,416.0 588.1,418.4 588.4,419.9 588.6,419.5 588.9,422.4 589.1,421.5 589.4,417.7 589.7,418.7 589.9,416.3 590.2,419.5 590.4,419.4 590.7,424.7 590.9,419.5 591.2,415.0 591.4,418.0 591.7,419.7 592.0,417.0 592.2,417.8 592.5,418.9 592.7,420.5 593.0,419.5 593.2,418.1 593.5,421.6 593.8,418.9 594.0,419.1 594.3,417.3 594.5,418.6 594.8,421.6 595.0,417.0 595.3,420.2 595.6,421.9 595.8,419.7 596.1,421.0 596.3,418.3 596.6,423.3 596.8,422.9 597.1,421.2 597.4,417.2 597.6,418.7 597.9,422.9 598.1,424.4 598.4,421.6 598.6,423.6 598.9,419.8 599.2,420.7 599.4,421.1 599.7,422.0 599.9,418.1 600.2,423.2 600.4,424.0 600.7,419.0 600.9,418.6 601.2,422.1 601.5,420.1 601.7,416.6 602.0,423.1 602.2,421.8 602.5,420.5 602.7,425.9 603.0,421.8 603.3,420.0 603.5,421.8 603.8,419.5 604.0,420.1 604.3,422.5 604.5,420.5 604.8,420.8 605.1,425.1 605.3,423.5 605.6,423.4 605.8,422.8 606.1,422.7 606.3,424.7 606.6,421.7 606.9,425.6 607.1,419.8 607.4,421.3 607.6,419.0 607.9,421.1 608.1,422.8 608.4,424.8 608.7,420.4 608.9,421.8 609.2,421.0 609.4,420.3 609.7,419.3 609.9,421.9 610.2,418.2 610.4,422.0 610.7,421.8 611.0,420.4 611.2,419.6 611.5,418.8 611.7,425.5 612.0,418.9 612.2,424.8 612.5,422.8 612.8,420.8 613.0,419.2 613.3,423.7 613.5,425.1 613.8,419.6 614.0,420.9 614.3,423.6 614.6,422.1 614.8,425.5 615.1,420.2 615.3,422.4 615.6,418.7 615.8,425.6 616.1,419.7 616.4,416.7 616.6,420.9 616.9,420.8 617.1,425.0 617.4,420.3 617.6,421.0 617.9,422.2 618.1,424.2 618.4,420.7 618.7,422.9 618.9,421.8 619.2,420.1 619.4,420.8 619.7,420.7 619.9,418.7 620.2,423.0 620.5,417.6 620.7,422.8 621.0,422.3 621.2,420.1 621.5,418.7 621.7,419.7 622.0,421.1 622.3,421.6 622.5,420.6 622.8,422.0 623.0,418.7 623.3,420.3 623.5,416.5 623.8,421.2 624.1,419.9 624.3,418.7 624.6,421.8 624.8,420.8 625.1,413.5 625.3,419.3 625.6,416.2 625.9,421.3 626.1,424.1 626.4,417.8 626.6,419.0 626.9,418.2 627.1,419.4 627.4,419.9 627.6,421.1 627.9,416.4 628.2,421.5 628.4,416.3 628.7,418.7 628.9,420.4 629.2,419.4 629.4,415.9 629.7,416.3 630.0,416.7 630.2,417.5 630.5,419.8 630.7,414.8 631.0,418.3 631.2,418.5 631.5,418.2 631.8,418.0 632.0,420.0 632.3,417.8 632.5,418.4 632.8,417.7 633.0,420.2 633.3,412.5 633.6,418.9 633.8,415.6 634.1,415.5 634.3,413.9 634.6,412.0 634.8,414.9 635.1,414.2 635.4,416.5 635.6,412.3 635.9,418.2 636.1,415.7 636.4,414.5 636.6,413.4 636.9,413.2 637.1,412.3 637.4,413.4 637.7,414.4 637.9,413.9 638.2,411.3 638.4,413.5 638.7,412.1 638.9,414.1 639.2,417.5 639.5,414.8 639.7,412.7 640.0,409.9 640.2,410.2 640.5,409.5 640.7,414.3 641.0,411.1 641.3,412.7 641.5,411.2 641.8,412.5 642.0,415.0 642.3,410.6 642.5,411.2 642.8,410.1 643.1,413.4 643.3,409.4 643.6,409.0 643.8,408.3 644.1,408.1 644.3,411.8 644.6,416.0 644.9,408.5 645.1,412.4 645.4,410.8 645.6,407.9 645.9,409.4 646.1,409.4 646.4,408.3 646.6,413.5 646.9,405.5 647.2,410.0 647.4,409.7 647.7,407.7 647.9,409.1 648.2,410.4 648.4,408.7 648.7,409.1 649.0,409.5 649.2,403.8 649.5,410.8 649.7,412.3 650.0,409.5 650.2,409.4 650.5,404.2 650.8,406.7 651.0,405.1 651.3,405.4 651.5,408.4 651.8,404.6 652.0,405.9 652.3,402.0 652.6,405.5 652.8,405.8 653.1,404.0 653.3,403.8 653.6,409.0 653.8,402.4 654.1,402.6 654.3,402.9 654.6,406.9 654.9,408.5 655.1,404.7 655.4,402.4 655.6,402.8 655.9,405.7 656.1,401.5 656.4,406.1 656.7,405.9 656.9,402.9 657.2,403.9 657.4,404.0 657.7,405.4 657.9,399.9 658.2,404.3 658.5,400.9 658.7,399.9 659.0,401.5 659.2,400.7 659.5,398.9 659.7,397.5 660.0,398.6 660.3,403.4 660.5,404.2 660.8,401.3 661.0,402.2 661.3,398.6 661.5,399.3 661.8,399.8 662.1,396.8 662.3,396.8 662.6,398.9 662.8,397.8 663.1,396.1 663.3,398.9 663.6,397.4 663.8,399.8 664.1,397.5 664.4,396.7 664.6,397.4 664.9,396.6 665.1,395.3 665.4,395.7 665.6,397.9 665.9,397.4 666.2,398.6 666.4,392.3 666.7,394.7 666.9,394.5 667.2,395.5 667.4,394.0 667.7,393.7 668.0,396.1 668.2,394.7 668.5,391.7 668.7,396.7 669.0,395.8 669.2,392.3 669.5,395.0 669.8,391.6 670.0,395.2 670.3,392.3 670.5,390.8 670.8,391.5 671.0,390.5 671.3,392.3 671.6,392.0 671.8,391.5 672.1,390.1 672.3,383.5 672.6,391.0 672.8,386.8 673.1,390.9 673.3,392.5 673.6,390.6 673.9,389.0 674.1,389.2 674.4,389.1 674.6,388.1 674.9,387.8 675.1,386.9 675.4,391.0 675.7,388.3 675.9,390.1 676.2,387.4 676.4,387.9 676.7,387.2 676.9,388.3 677.2,388.8 677.5,387.4 677.7,385.3 678.0,384.9 678.2,389.7 678.5,385.5 678.7,385.2 679.0,388.6 679.3,387.7 679.5,386.3 679.8,384.2 680.0,389.6 680.3,385.4 680.5,385.5 680.8,383.8 681.1,381.0 681.3,381.0 681.6,384.4 681.8,384.1 682.1,382.6 682.3,380.5 682.6,379.7 682.8,381.8 683.1,379.3 683.4,383.9 683.6,384.2 683.9,387.4 684.1,383.2 684.4,380.0 684.6,379.2 684.9,373.7 685.2,379.4 685.4,380.0 685.7,382.1 685.9,381.2 686.2,380.9 686.4,380.0 686.7,380.7 687.0,382.1 687.2,376.7 687.5,377.8 687.7,375.6 688.0,381.6 688.2,380.7 688.5,379.4 688.8,375.2 689.0,377.8 689.3,376.7 689.5,377.2 689.8,376.4 690.0,377.7 690.3,375.6 690.5,377.9 690.8,376.5 691.1,375.2 691.3,375.3 691.6,374.5 691.8,376.8 692.1,374.4 692.3,375.3 692.6,373.7 692.9,371.3 693.1,376.0 693.4,371.8 693.6,375.1 693.9,374.4 694.1,369.9 694.4,371.2 694.7,371.8 694.9,371.0 695.2,370.1 695.4,373.8 695.7,371.6 695.9,372.7 696.2,370.8 696.5,372.1 696.7,369.7 697.0,371.0 697.2,372.1 697.5,370.8 697.7,369.6 698.0,368.1 698.3,370.4 698.5,370.6 698.8,369.2 699.0,367.9 699.3,370.4 699.5,374.2 699.8,368.3 700.0,369.4 700.3,369.3 700.6,363.1 700.8,368.4 701.1,366.5 701.3,370.6 701.6,367.0 701.8,365.8 702.1,366.7 702.4,367.3 702.6,365.6 702.9,366.5 703.1,363.6 703.4,365.7 703.6,367.6 703.9,369.9 704.2,367.1 704.4,366.0 704.7,367.7 704.9,367.2 705.2,368.3 705.4,366.9 705.7,364.3 706.0,364.9 706.2,364.5 706.5,364.6 706.7,364.2 707.0,362.0 707.2,359.1 707.5,361.9 707.8,358.9 708.0,363.0 708.3,362.7 708.5,359.1 708.8,363.8 709.0,364.0 709.3,362.2 709.5,365.2 709.8,365.5 710.1,359.0 710.3,363.4 710.6,362.0 710.8,361.8 711.1,362.7 711.3,359.1 711.6,359.2 711.9,358.6 712.1,358.5 712.4,359.7 712.6,356.8 712.9,357.4 713.1,360.6 713.4,359.1 713.7,359.9 713.9,355.1 714.2,357.2 714.4,357.5 714.7,358.5 714.9,357.1 715.2,360.0 715.5,357.8 715.7,357.8 716.0,357.7 716.2,358.9 716.5,356.4 716.7,359.5 717.0,358.0 717.3,357.2 717.5,356.8 717.8,357.6 718.0,358.5 718.3,358.2 718.5,356.9 718.8,357.7 719.0,356.0 719.3,358.2 719.6,355.4 719.8,351.1 720.1,357.9 720.3,355.3 720.6,352.5 720.8,354.4 721.1,352.8 721.4,358.8 721.6,355.4 721.9,351.0 722.1,355.2 722.4,353.1 722.6,357.7 722.9,351.5 723.2,348.9 723.4,353.5 723.7,352.5 723.9,352.3 724.2,348.6 724.4,353.7 724.7,356.2 725.0,348.7 725.2,354.9 725.5,351.2 725.7,357.0 726.0,353.0 726.2,351.6 726.5,354.1 726.7,352.8 727.0,350.4 727.3,352.9 727.5,350.3 727.8,347.6 728.0,355.3 728.3,350.3 728.5,349.6 728.8,351.5 729.1,347.5 729.3,347.8 729.6,349.4 729.8,349.2 730.1,350.3 730.3,352.4 730.6,349.0 730.9,350.9 731.1,351.0 731.4,347.4 731.6,350.0 731.9,347.5 732.1,351.5 732.4,350.2 732.7,349.2 732.9,346.3 733.2,349.2 733.4,347.3 733.7,350.2 733.9,348.4 734.2,346.9 734.5,350.4 734.7,349.9 735.0,347.1 735.2,350.6 735.5,347.5 735.7,347.4 736.0,348.2 736.2,346.3 736.5,346.9 736.8,347.3 737.0,350.7 737.3,350.6 737.5,346.9 737.8,350.7 738.0,347.2 738.3,348.0 738.6,348.9 738.8,347.6 739.1,351.9 739.3,347.4 739.6,344.4 739.8,349.4 740.1,345.8 740.4,346.0 740.6,340.4 740.9,348.5 741.1,348.1 741.4,348.0 741.6,348.3 741.9,349.7 742.2,346.1 742.4,348.0 742.7,344.5 742.9,345.3 743.2,348.1 743.4,346.7 743.7,343.1 744.0,346.5 744.2,345.3 744.5,344.0 744.7,346.5 745.0,344.7 745.2,342.3 745.5,343.2 745.7,349.0 746.0,342.3 746.3,345.8 746.5,346.5 746.8,346.5 747.0,342.7 747.3,344.5 747.5,345.4 747.8,346.7 748.1,343.7 748.3,342.6 748.6,347.0 748.8,347.2 749.1,345.7 749.3,343.6 749.6,345.7 749.9,345.0 750.1,346.5 750.4,342.2 750.6,345.0 750.9,344.4 751.1,342.4 751.4,345.1 751.7,344.7 751.9,343.8 752.2,345.4 752.4,341.7 752.7,344.5 752.9,345.5 753.2,345.1 753.5,346.8 753.7,342.1 754.0,341.4 754.2,345.0 754.5,345.5 754.7,348.9 755.0,345.8 755.2,342.7 755.5,346.2 755.8,342.8 756.0,341.5 756.3,349.8 756.5,345.2 756.8,346.0 757.0,345.7 757.3,348.2 757.6,345.1 757.8,347.0 758.1,342.4 758.3,341.7 758.6,347.5 758.8,347.6 759.1,345.6 759.4,345.1 759.6,345.0 759.9,343.2 760.1,347.8 760.4,346.0 760.6,345.7 760.9,345.5 761.2,346.9 761.4,345.8 761.7,346.3 761.9,342.4 762.2,345.9 762.4,349.3 762.7,343.8 762.9,344.7 763.2,346.8 763.5,346.9 763.7,346.3 764.0,341.7 764.2,346.1 764.5,342.7 764.7,343.5 765.0,346.3 765.3,344.6 765.5,346.9 765.8,351.8 766.0,347.0 766.3,346.9 766.5,343.6 766.8,344.2 767.1,343.4 767.3,344.5 767.6,343.4 767.8,344.4 768.1,345.3 768.3,343.8 768.6,343.0 768.9,343.1 769.1,346.9 769.4,346.2 769.6,348.2 769.9,348.3 770.1,345.5 770.4,347.7 770.7,343.4 770.9,351.1 771.2,348.9 771.4,346.1 771.7,344.2 771.9,347.5 772.2,342.9 772.4,345.2 772.7,348.4 773.0,347.1 773.2,346.1 773.5,349.1 773.7,345.1 774.0,347.9 774.2,346.3 774.5,345.7 774.8,348.5 775.0,345.6 775.3,351.6 775.5,346.6 775.8,351.9 776.0,345.7 776.3,349.3 776.6,345.7 776.8,345.5 777.1,348.6 777.3,349.8 777.6,345.9 777.8,351.0 778.1,347.0 778.4,349.0 778.6,349.7 778.9,350.2 779.1,345.4 779.4,352.5 779.6,350.4 779.9,348.5 780.2,347.4 780.4,346.1 780.7,346.9 780.9,350.9 781.2,349.2 781.4,347.7 781.7,349.0 781.9,353.4 782.2,349.7 782.5,349.3 782.7,353.3 783.0,351.6 783.2,350.9 783.5,349.7 783.7,347.8 784.0,348.7 784.3,350.3 784.5,350.9 784.8,352.2 785.0,352.8 785.3,352.2 785.5,352.3 785.8,349.9 786.1,347.7 786.3,351.2 786.6,350.4 786.8,351.2 787.1,352.1 787.3,350.2 787.6,350.6 787.9,352.8 788.1,353.4 788.4,351.9 788.6,354.4 788.9,353.1 789.1,351.6 789.4,353.9 789.7,357.8 789.9,352.7 790.2,356.6 790.4,357.2 790.7,357.6 790.9,353.0 791.2,358.9 791.4,355.2 791.7,354.6 792.0,354.8 792.2,356.6 792.5,355.6 792.7,355.3 793.0,358.5 793.2,354.5 793.5,354.0 793.8,357.9 794.0,357.9 794.3,358.8 794.5,354.5 794.8,359.1 795.0,358.0 795.3,360.8 795.6,354.8 795.8,358.0 796.1,357.1 796.3,354.6 796.6,356.5 796.8,360.5 797.1,357.4 797.4,357.0 797.6,360.4 797.9,360.8 798.1,361.0 798.4,357.5 798.6,359.2 798.9,361.6 799.2,358.3 799.4,358.3 799.7,361.7 799.9,363.3 800.2,357.9 800.4,355.2 800.7,357.7 800.9,358.7 801.2,360.7 801.5,362.4 801.7,361.0 802.0,360.1 802.2,362.0 802.5,359.9 802.7,361.9 803.0,360.9 803.3,367.9 803.5,364.3 803.8,361.0 804.0,360.9 804.3,362.2 804.5,359.9 804.8,362.0 805.1,362.1 805.3,365.7 805.6,363.2 805.8,362.6 806.1,361.6 806.3,362.2 806.6,364.6 806.9,364.5 807.1,367.5 807.4,364.0 807.6,367.7 807.9,366.2 808.1,365.9 808.4,362.0 808.6,363.6 808.9,368.0 809.2,369.5 809.4,367.3 809.7,368.6 809.9,366.4 810.2,366.6 810.4,366.2 810.7,369.8 811.0,368.7 811.2,367.7 811.5,367.7 811.7,369.7 812.0,369.4 812.2,367.3 812.5,372.7 812.8,369.9 813.0,369.6 813.3,372.8 813.5,372.1 813.8,370.0 814.0,371.4 814.3,368.4 814.6,369.4 814.8,366.3 815.1,373.7 815.3,367.5 815.6,372.9 815.8,370.0 816.1,369.9 816.4,371.8 816.6,372.9 816.9,373.8 817.1,376.4 817.4,373.7 817.6,375.0 817.9,372.1 818.1,375.0 818.4,374.1 818.7,373.0 818.9,374.0 819.2,374.3 819.4,375.0 819.7,375.6 819.9,374.0 820.2,373.7 820.5,377.0 820.7,372.2 821.0,374.6 821.2,379.2 821.5,370.7 821.7,375.0 822.0,378.1 822.3,373.5 822.5,382.4 822.8,372.0 823.0,380.5 823.3,380.9 823.5,379.8 823.8,377.7 824.1,379.1 824.3,376.7 824.6,380.4 824.8,376.7 825.1,378.6 825.3,381.4 825.6,377.3 825.9,379.1 826.1,380.4 826.4,377.5 826.6,382.8 826.9,381.3 827.1,377.8 827.4,381.0 827.6,379.7 827.9,380.1 828.2,381.9 828.4,380.5 828.7,384.1 828.9,380.9 829.2,384.6 829.4,382.7 829.7,384.7 830.0,382.1 830.2,382.4 830.5,381.2 830.7,385.0 831.0,385.9 831.2,388.6 831.5,387.1 831.8,385.2 832.0,384.4 832.3,385.9 832.5,385.2 832.8,388.5 833.0,387.6 833.3,384.2 833.6,384.7 833.8,389.1 834.1,387.2 834.3,386.3 834.6,389.4 834.8,386.4 835.1,386.8 835.4,386.7 835.6,383.8 835.9,389.8 836.1,385.8 836.4,387.3 836.6,387.1 836.9,390.3 837.1,388.9 837.4,389.3 837.7,386.0 837.9,389.5 838.2,386.9 838.4,390.7 838.7,391.1 838.9,390.5 839.2,394.9 839.5,392.0 839.7,392.4 840.0,391.6 840.2,391.2 840.5,393.7 840.7,394.2 841.0,389.5 841.3,394.5 841.5,393.6 841.8,394.8 842.0,393.9 842.3,390.6 842.5,391.0 842.8,397.3 843.1,394.3 843.3,391.1 843.6,394.9 843.8,393.7 844.1,390.8 844.3,390.1 844.6,391.7 844.8,395.8 845.1,395.3 845.4,395.1 845.6,396.4 845.9,397.3 846.1,391.9 846.4,395.8 846.6,394.9 846.9,394.3 847.2,395.9 847.4,397.0 847.7,396.9 847.9,394.6 848.2,396.8 848.4,402.1 848.7,396.0 849.0,394.9 849.2,399.1 849.5,400.0 849.7,399.9 850.0,396.9 850.2,401.4 850.5,397.9 850.8,397.4 851.0,398.7 851.3,399.9 851.5,401.8 851.8,401.8 852.0,400.6 852.3,402.8 852.6,401.2 852.8,403.1 853.1,398.5 853.3,398.4 853.6,403.4 853.8,399.1 854.1,401.5 854.3,402.1 854.6,401.5 854.9,401.8 855.1,405.8 855.4,397.9 855.6,405.1 855.9,408.1 856.1,403.7 856.4,403.8 856.7,405.5 856.9,407.9 857.2,401.9 857.4,404.7 857.7,404.3 857.9,406.0 858.2,405.4 858.5,406.6 858.7,404.5 859.0,405.7 859.2,404.4 859.5,404.5 859.7,405.8 860.0,405.9 860.3,404.0 860.5,409.8 860.8,406.5 861.0,404.1 861.3,409.3 861.5,405.7 861.8,408.5 862.1,407.5 862.3,408.3 862.6,408.3 862.8,406.9 863.1,408.3 863.3,412.6 863.6,404.0 863.8,408.8 864.1,409.8 864.4,406.9 864.6,406.4 864.9,413.8 865.1,408.7 865.4,413.9 865.6,410.9 865.9,410.1 866.2,411.1 866.4,411.6 866.7,412.8 866.9,411.4 867.2,411.0 867.4,411.2 867.7,413.8 868.0,412.8 868.2,409.2 868.5,410.1 868.7,412.3 869.0,410.4 869.2,411.1 869.5,410.0 869.8,411.6 870.0,413.2 870.3,414.5 870.5,412.6 870.8,417.0 871.0,412.7 871.3,419.5 871.6,415.2 871.8,414.3 872.1,412.4 872.3,407.7 872.6,413.3 872.8,414.1 873.1,417.8 873.3,411.2 873.6,418.1 873.9,413.8 874.1,415.9 874.4,409.3 874.6,414.9 874.9,414.1 875.1,416.3 875.4,415.2 875.7,412.8 875.9,417.2 876.2,416.8 876.4,416.7 876.7,417.7 876.9,418.0 877.2,415.8 877.5,413.2 877.7,413.2 878.0,418.9 878.2,417.7 878.5,416.6 878.7,415.6 879.0,416.7 879.3,416.8 879.5,416.1 879.8,415.5 880.0,421.5 880.3,417.6 880.5,416.0 880.8,414.7 881.0,415.9 881.3,419.0 881.6,419.2 881.8,417.3 882.1,417.9 882.3,417.3 882.6,415.7 882.8,420.8 883.1,419.0 883.4,423.4 883.6,416.8 883.9,418.2 884.1,420.4 884.4,418.1 884.6,415.9 884.9,416.9 885.2,419.1 885.4,419.7 885.7,418.9 885.9,421.2 886.2,421.2 886.4,419.9 886.7,419.4 887.0,418.9 887.2,420.6 887.5,421.5 887.7,419.8 888.0,420.6 888.2,419.1 888.5,417.0 888.8,417.9 889.0,421.6 889.3,421.0 889.5,423.4 889.8,420.3 890.0,422.0 890.3,423.0 890.5,422.4 890.8,419.2 891.1,420.1 891.3,420.8 891.6,418.6 891.8,421.6 892.1,422.8 892.3,419.8 892.6,424.9 892.9,420.3 893.1,420.5 893.4,420.5 893.6,419.6 893.9,421.9 894.1,421.1 894.4,424.6 894.7,422.4 894.9,422.3 895.2,420.8 895.4,418.4 895.7,421.2 895.9,419.6 896.2,423.4 896.5,421.4 896.7,424.9 897.0,423.0 897.2,423.3 897.5,422.1 897.7,422.0 898.0,423.0 898.3,423.6 898.5,420.2 898.8,422.7 899.0,427.1 899.3,421.6 899.5,421.3 899.8,420.4 900.0,418.8 900.3,424.3 900.6,422.0 900.8,422.5 901.1,425.7 901.3,427.0 901.6,420.1 901.8,424.1 902.1,423.2 902.4,422.7 902.6,422.9 902.9,421.9 903.1,425.2 903.4,423.2 903.6,422.7 903.9,424.5 904.2,423.8 904.4,422.9 904.7,422.6 904.9,425.5 905.2,423.0 905.4,421.8 905.7,420.2 906.0,421.2 906.2,419.8 906.5,422.1 906.7,422.4 907.0,417.7 907.2,421.9 907.5,423.2 907.8,422.2 908.0,419.9 908.3,424.4 908.5,420.4 908.8,419.2 909.0,419.5 909.3,421.7 909.5,423.7 909.8,424.1 910.1,422.1 910.3,419.2 910.6,420.2 910.8,419.7 911.1,421.2 911.3,417.9 911.6,421.7 911.9,422.7 912.1,421.1 912.4,422.3 912.6,419.4 912.9,418.3 913.1,419.9 913.4,423.6 913.7,423.3 913.9,420.2 914.2,423.5 914.4,420.3 914.7,424.1 914.9,421.9 915.2,419.9 915.5,422.5 915.7,419.2 916.0,418.8 916.2,417.7 916.5,421.1 916.7,420.4 917.0,420.3 917.2,419.6 917.5,423.3 917.8,419.5 918.0,418.8 918.3,422.8 918.5,423.0 918.8,420.8 919.0,416.4 919.3,418.7 919.6,421.1 919.8,419.8 920.1,422.9 920.3,416.9 920.6,421.0 920.8,418.2 921.1,422.2 921.4,419.2 921.6,421.4 921.9,417.9 922.1,416.2 922.4,416.8 922.6,417.7 922.9,416.8 923.2,421.3 923.4,421.5 923.7,419.2 923.9,416.4 924.2,418.2 924.4,417.0 924.7,421.3 925.0,418.8 925.2,419.1 925.5,417.2 925.7,413.8 926.0,416.2 926.2,415.4 926.5,418.4 926.7,417.7 927.0,415.8 927.3,416.5 927.5,420.5 927.8,415.2 928.0,415.2 928.3,416.5 928.5,415.4 928.8,415.8 929.1,417.7 929.3,420.1 929.6,412.8 929.8,416.3 930.1,416.3 930.3,415.9 930.6,415.6 930.9,415.1 931.1,417.8 931.4,414.7 931.6,415.2 931.9,415.4 932.1,415.5 932.4,414.8 932.7,417.1 932.9,414.9 933.2,415.1 933.4,414.6 933.7,412.5 933.9,412.7 934.2,412.1 934.5,414.6 934.7,412.6 935.0,411.7 935.2,414.3 935.5,414.7 935.7,409.9 936.0,416.8 936.2,413.3 936.5,412.9 936.8,415.2 937.0,413.0 937.3,411.5 937.5,417.1 937.8,410.2 938.0,412.1 938.3,413.9 938.6,409.8 938.8,411.7 939.1,412.5 939.3,416.5 939.6,409.6 939.8,411.2 940.1,412.5 940.4,411.2 940.6,408.4 940.9,411.5 941.1,410.8 941.4,411.3 941.6,412.6 941.9,412.2 942.2,410.8 942.4,410.4 942.7,407.4 942.9,409.2 943.2,409.8 943.4,408.4 943.7,409.2 944.0,407.2 944.2,411.9 944.5,413.0 944.7,407.6 945.0,409.1 945.2,407.6 945.5,410.5 945.7,408.6 946.0,407.7 946.3,407.0 946.5,407.5 946.8,405.0 947.0,408.3 947.3,405.3 947.5,407.7 947.8,406.7 948.1,408.5 948.3,406.0 948.6,408.0 948.8,403.8 949.1,406.8 949.3,404.9 949.6,405.6 949.9,405.2 950.1,406.8 950.4,400.6 950.6,405.2 950.9,401.3 951.1,406.6 951.4,399.9 951.7,401.7 951.9,400.2 952.2,406.8 952.4,400.6 952.7,403.3 952.9,401.8 953.2,399.0 953.4,401.9 953.7,403.7 954.0,401.8 954.2,403.9 954.5,401.1 954.7,401.6 955.0,400.6 955.2,402.0 955.5,405.0 955.8,401.6 956.0,401.1 956.3,399.2 956.5,398.8 956.8,403.1 957.0,397.6 957.3,397.9 957.6,399.3 957.8,398.5 958.1,403.2 958.3,394.1 958.6,399.5 958.8,400.0 959.1,396.1 959.4,396.9 959.6,398.9 959.9,401.1 960.1,395.7 960.4,394.2 960.6,399.2 960.9,400.1 961.2,396.1 961.4,392.1 961.7,399.4 961.9,395.8 962.2,398.3 962.4,395.7 962.7,394.9 962.9,394.5 963.2,398.3 963.5,398.0 963.7,390.4 964.0,392.7 964.2,398.1 964.5,393.5 964.7,391.2 965.0,393.8 965.3,393.4 965.5,393.2 965.8,392.2 966.0,392.4 966.3,391.9 966.5,393.3 966.8,390.7 967.1,391.6 967.3,391.7 967.6,394.5 967.8,392.3 968.1,391.1 968.3,392.3 968.6,391.8 968.9,393.0 969.1,391.6 969.4,394.0 969.6,392.9 969.9,389.8 970.1,388.9 970.4,391.3 970.7,390.4 970.9,388.9 971.2,385.8 971.4,384.9 971.7,389.2 971.9,389.8 972.2,389.7 972.4,385.2 972.7,389.7 973.0,386.3 973.2,388.0 973.5,387.8 973.7,385.1 974.0,385.4 974.2,382.1 974.5,384.3 974.8,382.2 975.0,386.6 975.3,385.6 975.5,387.2 975.8,385.8 976.0,383.6 976.3,385.4 976.6,383.7 976.8,385.5 977.1,384.7 977.3,381.8 977.6,383.6 977.8,383.5 978.1,382.6 978.4,384.8 978.6,386.3 978.9,381.8 979.1,381.6 979.4,377.5 979.6,381.7 979.9,380.8 980.2,377.1 980.4,381.9 980.7,382.3 980.9,379.4 981.2,379.9 981.4,378.5 981.7,381.8 981.9,376.9 982.2,379.2 982.5,383.6 982.7,379.5 983.0,380.2 983.2,378.7 983.5,376.4 983.7,378.5 984.0,379.2 984.3,376.1 984.5,378.6 984.8,380.3 985.0,379.7 985.3,374.1 985.5,375.1 985.8,373.6 986.1,378.9 986.3,377.7 986.6,377.7 986.8,374.3 987.1,373.5 987.3,375.8 987.6,375.7 987.9,373.5 988.1,375.3 988.4,376.2 988.6,375.1 988.9,372.3 989.1,369.9 989.4,373.5 989.6,374.1 989.9,373.1 990.2,372.5 990.4,371.8 990.7,374.5 990.9,372.7 991.2,372.8 991.4,370.4 991.7,370.9 992.0,372.3 992.2,369.7 992.5,369.0 992.7,370.7 993.0,373.6 993.2,371.4 993.5,373.8 993.8,370.3 994.0,369.7 994.3,367.3 994.5,368.8 994.8,372.7 995.0,370.3 995.3,370.9 995.6,370.6 995.8,369.0 996.1,368.4 996.3,368.9 996.6,369.8 996.8,369.2 997.1,369.0 997.4,368.1 997.6,366.1 997.9,366.9 998.1,365.3 998.4,369.1 998.6,362.6 998.9,366.2 999.1,371.4 999.4,365.6 999.7,363.8 999.9,365.9 1000.2,368.4 1000.4,365.2 1000.7,366.6 1000.9,365.4 1001.2,364.2 1001.5,371.3 1001.7,364.8 1002.0,363.3 1002.2,363.2 1002.5,364.8 1002.7,364.7 1003.0,365.3"/>
<path d="M76.300 389.500H72.600V412.500H68.500" fill="none" stroke="#eef2ee" stroke-width="2.200"/>
</svg>
<!-- h scrollbar -->
<div class="a" style="left:79px;top:532px;width:908px;height:16px;background:#f0f0f0;border-top:1px solid #fff;border-left:1px solid #fff;border-right:1px solid #404040;border-bottom:1px solid #404040;box-shadow:inset -1px -1px 0 #a0a0a0"></div>
<div class="a" style="left:987px;top:532px;width:16px;height:16px;background:#f0f0f0;border-top:1px solid #fff;border-left:1px solid #fff;border-right:1px solid #404040;border-bottom:1px solid #404040;box-shadow:inset -1px -1px 0 #a0a0a0"></div>
<div class="hl" style="left:19px;top:548px;width:984px;background:#fff"></div>
<div class="hl" style="left:19px;top:547px;width:60px;background:#8c8c8c"></div>
<svg style="left:79px;top:532px" width="30" height="16"><path d="M4 7L9.800 3.700V10.300Z" fill="#000"/><path d="M16.200 15V6" stroke="#000" stroke-width="2.100"/><path d="M16.200 -0.300L10.800 7.800H22.200Z" fill="#000"/></svg>
<svg style="left:987px;top:532px" width="16" height="16"><path d="M4.800 3.800V10.200L11.200 7Z" fill="#000"/></svg>
<!-- time axis -->
<div class="a" style="left:19px;top:549px;width:1024px;height:21px;background:#000;border-right:1px solid #686868;border-bottom:1px solid #686868"></div>
<div class="hl" style="left:19px;top:570px;width:1025px;background:#b4b4b4"></div>
<div class="vl" style="left:1043px;top:549px;height:22px;background:#b4b4b4"></div>
<div class="t xl" style="letter-spacing:-0.308px;left:49.0px;width:60px">0 s</div>
<div class="t xl" style="letter-spacing:-0.554px;left:141.4px;width:60px">100.0 µs</div>
<div class="t xl" style="letter-spacing:-0.554px;left:233.8px;width:60px">200.0 µs</div>
<div class="t xl" style="letter-spacing:-0.554px;left:326.2px;width:60px">300.0 µs</div>
<div class="t xl" style="letter-spacing:-0.554px;left:418.6px;width:60px">400.0 µs</div>
<div class="t xl" style="letter-spacing:-0.554px;left:511.0px;width:60px">500.0 µs</div>
<div class="t xl" style="letter-spacing:-0.554px;left:603.4px;width:60px">600.0 µs</div>
<div class="t xl" style="letter-spacing:-0.554px;left:695.8px;width:60px">700.0 µs</div>
<div class="t xl" style="letter-spacing:-0.554px;left:788.2px;width:60px">800.0 µs</div>
<div class="t xl" style="letter-spacing:-0.554px;left:880.6px;width:60px">900.0 µs</div>
<div class="t xl" style="letter-spacing:-0.481px;left:978.3px;text-align:left">1.0000 ms</div>



<div class="a" style="left:13px;top:571px;width:1032px;height:2px;background:#fafafa"></div>
<div class="hl" style="left:1px;top:573px;width:1044px;background:#dadada"></div>
<svg style="left:1035px;top:582px" width="9" height="9" shape-rendering="crispEdges"><g fill="#bfbfbf"><rect x="6" y="0" width="2" height="2"/><rect x="3" y="3" width="2" height="2"/><rect x="6" y="3" width="2" height="2"/><rect x="0" y="6" width="2" height="2"/><rect x="3" y="6" width="2" height="2"/><rect x="6" y="6" width="2" height="2"/></g></svg>

</body>
</html>
